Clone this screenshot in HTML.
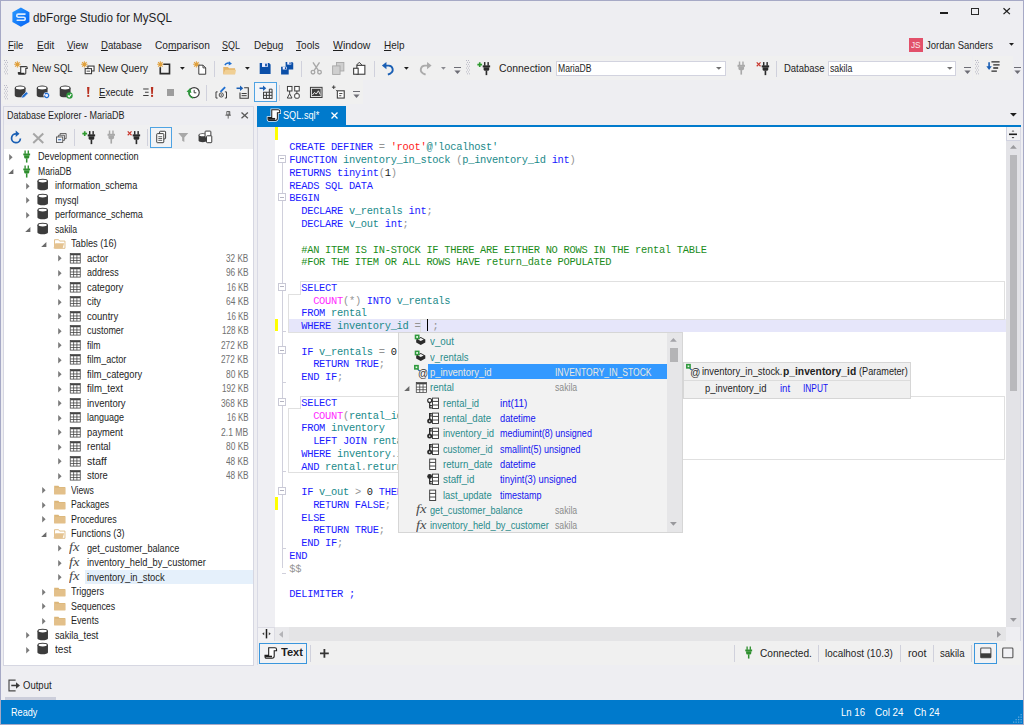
<!DOCTYPE html>
<html lang="en"><head><meta charset="utf-8"><title>dbForge Studio for MySQL</title>
<style>
*{margin:0;padding:0}
html,body{width:1024px;height:725px;overflow:hidden;background:#eeeef2}
body{position:relative;font-family:"Liberation Sans", sans-serif;font-size:10px;color:#1e1e1e}
#app{position:absolute;left:0;top:0;width:1024px;height:725px;overflow:hidden;background:#eeeef2}
#app div,#app svg.i,.t{position:absolute}
.t{white-space:pre;line-height:1;transform-origin:0 50%}
.t u{text-decoration:underline;text-underline-offset:1px;text-decoration-thickness:1px}
svg.i{overflow:visible}
</style></head>
<body><div id="app">
<div style="left:0.00px;top:0.00px;width:1024.00px;height:725.00px;border:1px solid #a6a9c6;box-sizing:border-box;z-index:50;pointer-events:none;"></div>
<svg class="i" style="left:11.50px;top:7.00px;" width="18" height="20" viewBox="0 0 18 20"><defs><linearGradient id="lg" x1="0" y1="0" x2="1" y2="1"><stop offset="0" stop-color="#2a9bff"/><stop offset="1" stop-color="#0562f5"/></linearGradient></defs>
<path d="M8.9 0.4 L17.4 5.2 V14.9 L8.9 19.8 L0.4 14.9 V5.2 Z" fill="url(#lg)"/>
<path d="M13 7.1 H6.3 a1.55 1.55 0 0 0 0 3.1 H11.7 a1.55 1.55 0 0 1 0 3.1 H5.2" fill="none" stroke="#dcecff" stroke-width="1.6" stroke-linecap="round"/></svg>
<span class="t" style="left:33.40px;top:12px;font-size:12px;color:#1e1e1e;transform:scaleX(0.9738);">dbForge Studio for MySQL</span>
<div style="left:940.00px;top:12.10px;width:8.00px;height:2.00px;background:#1e1e1e;"></div>
<div style="left:971.00px;top:7.70px;width:8.30px;height:7.50px;border:1px solid #2a2a2a;box-sizing:border-box;border-top-width:1.6px;"></div>
<svg class="i" style="left:1003.40px;top:8.40px;" width="7.4" height="6.4" viewBox="0 0 7.4 6.4"><path d="M0.5 0.3 L6.9 6.1 M6.9 0.3 L0.5 6.1" stroke="#1e1e1e" stroke-width="1.25" fill="none"/></svg>
<span class="t" style="left:8.40px;top:40px;font-size:11px;color:#1e1e1e;transform:scaleX(0.8627);"><u>F</u>ile</span>
<span class="t" style="left:36.70px;top:40px;font-size:11px;color:#1e1e1e;transform:scaleX(0.9120);"><u>E</u>dit</span>
<span class="t" style="left:66.80px;top:40px;font-size:11px;color:#1e1e1e;transform:scaleX(0.8877);"><u>V</u>iew</span>
<span class="t" style="left:100.80px;top:40px;font-size:11px;color:#1e1e1e;transform:scaleX(0.8685);"><u>D</u>atabase</span>
<span class="t" style="left:154.70px;top:40px;font-size:11px;color:#1e1e1e;transform:scaleX(0.9239);">Co<u>m</u>parison</span>
<span class="t" style="left:222.40px;top:40px;font-size:11px;color:#1e1e1e;transform:scaleX(0.8131);"><u>S</u>QL</span>
<span class="t" style="left:253.70px;top:40px;font-size:11px;color:#1e1e1e;transform:scaleX(0.9068);">De<u>b</u>ug</span>
<span class="t" style="left:296.30px;top:40px;font-size:11px;color:#1e1e1e;transform:scaleX(0.9148);"><u>T</u>ools</span>
<span class="t" style="left:333.00px;top:40px;font-size:11px;color:#1e1e1e;transform:scaleX(0.9559);"><u>W</u>indow</span>
<span class="t" style="left:383.50px;top:40px;font-size:11px;color:#1e1e1e;transform:scaleX(0.9061);"><u>H</u>elp</span>
<div style="left:909.00px;top:38.40px;width:13.50px;height:13.20px;background:#e2506a;"></div>
<span class="t" style="left:911.00px;top:41px;font-size:8.6px;color:#fbe9ec;transform:scaleX(0.9570);">JS</span>
<span class="t" style="left:926.20px;top:40px;font-size:11px;color:#1e1e1e;transform:scaleX(0.8626);">Jordan Sanders</span>
<svg class="i" style="left:1009.10px;top:43.20px;" width="5" height="3" viewBox="0 0 5 3"><path d="M0 0 H5 L2.5 2.8 Z" fill="#1e1e1e"/></svg>
<div style="left:1.00px;top:56.20px;width:461.50px;height:23.80px;background:#f0f0f0;"></div>
<div style="left:463.00px;top:56.20px;width:509.00px;height:23.80px;background:#f0f0f0;"></div>
<div style="left:972.50px;top:56.20px;width:40.00px;height:23.80px;background:#f0f0f0;"></div>
<div style="left:1.00px;top:80.20px;width:361.50px;height:24.00px;background:#f0f0f0;"></div>
<svg class="i" style="left:3.50px;top:60.00px;" width="5" height="16" viewBox="0 0 5 16"><g fill="#b9b9c6"><rect x="0" y="0.0" width="1" height="1"/><rect x="2" y="0.0" width="1" height="1"/><rect x="1" y="1.9" width="1" height="1"/><rect x="3" y="1.9" width="1" height="1"/><rect x="0" y="3.8" width="1" height="1"/><rect x="2" y="3.8" width="1" height="1"/><rect x="1" y="5.7" width="1" height="1"/><rect x="3" y="5.7" width="1" height="1"/><rect x="0" y="7.6" width="1" height="1"/><rect x="2" y="7.6" width="1" height="1"/><rect x="1" y="9.5" width="1" height="1"/><rect x="3" y="9.5" width="1" height="1"/><rect x="0" y="11.4" width="1" height="1"/><rect x="2" y="11.4" width="1" height="1"/><rect x="1" y="13.3" width="1" height="1"/><rect x="3" y="13.3" width="1" height="1"/></g></svg>
<svg class="i" style="left:3.50px;top:84.50px;" width="5" height="16" viewBox="0 0 5 16"><g fill="#b9b9c6"><rect x="0" y="0.0" width="1" height="1"/><rect x="2" y="0.0" width="1" height="1"/><rect x="1" y="1.9" width="1" height="1"/><rect x="3" y="1.9" width="1" height="1"/><rect x="0" y="3.8" width="1" height="1"/><rect x="2" y="3.8" width="1" height="1"/><rect x="1" y="5.7" width="1" height="1"/><rect x="3" y="5.7" width="1" height="1"/><rect x="0" y="7.6" width="1" height="1"/><rect x="2" y="7.6" width="1" height="1"/><rect x="1" y="9.5" width="1" height="1"/><rect x="3" y="9.5" width="1" height="1"/><rect x="0" y="11.4" width="1" height="1"/><rect x="2" y="11.4" width="1" height="1"/><rect x="1" y="13.3" width="1" height="1"/><rect x="3" y="13.3" width="1" height="1"/></g></svg>
<svg class="i" style="left:465.50px;top:60.00px;" width="5" height="16" viewBox="0 0 5 16"><g fill="#b9b9c6"><rect x="0" y="0.0" width="1" height="1"/><rect x="2" y="0.0" width="1" height="1"/><rect x="1" y="1.9" width="1" height="1"/><rect x="3" y="1.9" width="1" height="1"/><rect x="0" y="3.8" width="1" height="1"/><rect x="2" y="3.8" width="1" height="1"/><rect x="1" y="5.7" width="1" height="1"/><rect x="3" y="5.7" width="1" height="1"/><rect x="0" y="7.6" width="1" height="1"/><rect x="2" y="7.6" width="1" height="1"/><rect x="1" y="9.5" width="1" height="1"/><rect x="3" y="9.5" width="1" height="1"/><rect x="0" y="11.4" width="1" height="1"/><rect x="2" y="11.4" width="1" height="1"/><rect x="1" y="13.3" width="1" height="1"/><rect x="3" y="13.3" width="1" height="1"/></g></svg>
<svg class="i" style="left:975.30px;top:60.00px;" width="5" height="16" viewBox="0 0 5 16"><g fill="#b9b9c6"><rect x="0" y="0.0" width="1" height="1"/><rect x="2" y="0.0" width="1" height="1"/><rect x="1" y="1.9" width="1" height="1"/><rect x="3" y="1.9" width="1" height="1"/><rect x="0" y="3.8" width="1" height="1"/><rect x="2" y="3.8" width="1" height="1"/><rect x="1" y="5.7" width="1" height="1"/><rect x="3" y="5.7" width="1" height="1"/><rect x="0" y="7.6" width="1" height="1"/><rect x="2" y="7.6" width="1" height="1"/><rect x="1" y="9.5" width="1" height="1"/><rect x="3" y="9.5" width="1" height="1"/><rect x="0" y="11.4" width="1" height="1"/><rect x="2" y="11.4" width="1" height="1"/><rect x="1" y="13.3" width="1" height="1"/><rect x="3" y="13.3" width="1" height="1"/></g></svg>
<svg class="i" style="left:14.05px;top:60.95px;" width="14.5" height="14.5" viewBox="0 0 16 16"><g stroke="#e0a03c" stroke-width="1.15" fill="none"><path d="M3.7 0.2 V7.2 M0.2 3.7 H7.2 M1.2 1.2 L6.2 6.2 M6.2 1.2 L1.2 6.2"/></g><circle cx="3.7" cy="3.7" r="1.3" fill="#e0a03c"/><path d="M7.4 6.2 H13.4 Q14.6 6.2 14.6 7.4 V8.2 H13 V13.6 Q13 14.6 11.8 14.6 H6 Q4.8 14.6 4.8 13.6 V12.6 H7.4 Z" fill="#fafafa" stroke="#3c3c3c" stroke-width="1.2"/><path d="M5 13.8 H11.6" stroke="#2b2b2b" stroke-width="1.6"/></svg>
<span class="t" style="left:31.60px;top:63px;font-size:11.4px;color:#1e1e1e;transform:scaleX(0.8328);">New SQL</span>
<svg class="i" style="left:80.75px;top:60.95px;" width="14.5" height="14.5" viewBox="0 0 16 16"><g stroke="#e0a03c" stroke-width="1.15" fill="none"><path d="M3.7 0.2 V7.2 M0.2 3.7 H7.2 M1.2 1.2 L6.2 6.2 M6.2 1.2 L1.2 6.2"/></g><circle cx="3.7" cy="3.7" r="1.3" fill="#e0a03c"/><rect x="7.6" y="5.6" width="6.8" height="5.4" fill="#fff" stroke="#3c3c3c" stroke-width="1.2"/><rect x="4.6" y="8.4" width="7" height="5.6" fill="#fff" stroke="#3c3c3c" stroke-width="1.2"/><path d="M6.2 11.2 H10" stroke="#3c3c3c" stroke-width="1"/></svg>
<span class="t" style="left:98.40px;top:63px;font-size:11.4px;color:#1e1e1e;transform:scaleX(0.8774);">New Query</span>
<svg class="i" style="left:157.25px;top:60.95px;" width="14.5" height="14.5" viewBox="0 0 16 16"><g stroke="#e0a03c" stroke-width="1.15" fill="none"><path d="M3.7 0.2 V7.2 M0.2 3.7 H7.2 M1.2 1.2 L6.2 6.2 M6.2 1.2 L1.2 6.2"/></g><circle cx="3.7" cy="3.7" r="1.3" fill="#e0a03c"/><path d="M7 3.6 H13.8 V14 H3.6 V7" fill="none" stroke="#2b2b2b" stroke-width="1.8"/></svg>
<svg class="i" style="left:179.80px;top:67.10px;" width="4.8" height="3" viewBox="0 0 4.8 3"><path d="M0 0 H4.8 L2.4 2.7 Z" fill="#1e1e1e"/></svg>
<svg class="i" style="left:193.35px;top:60.95px;" width="14.5" height="14.5" viewBox="0 0 16 16"><g stroke="#e0a03c" stroke-width="1.15" fill="none"><path d="M3.7 0.2 V7.2 M0.2 3.7 H7.2 M1.2 1.2 L6.2 6.2 M6.2 1.2 L1.2 6.2"/></g><circle cx="3.7" cy="3.7" r="1.3" fill="#e0a03c"/><path d="M6.4 4.6 H11 L14 7.6 V14.6 H6.4 Z" fill="#fff" stroke="#3c3c3c" stroke-width="1.1"/><path d="M11 4.6 V7.6 H14" fill="none" stroke="#3c3c3c" stroke-width="1"/></svg>
<div style="left:213.80px;top:60.50px;width:1.00px;height:16.00px;background:#d0d1dc;"></div>
<svg class="i" style="left:221.75px;top:60.95px;" width="14.5" height="14.5" viewBox="0 0 16 16"><path d="M1.4 6.6 H6.6 L7.8 8 H14.4 V14.6 H1.4 Z" fill="#e5b467"/><path d="M1.4 14.6 L3.6 9.6 H15.6 L14.4 14.6 Z" fill="#f0cf94"/><path d="M3.2 4.6 C4.2 2.4 6.6 2 8.6 2.6" stroke="#1f6fd0" stroke-width="1.6" fill="none"/><path d="M7.6 0.4 L11 3 L7.4 5 Z" fill="#1f6fd0"/></svg>
<svg class="i" style="left:244.80px;top:67.10px;" width="4.8" height="3" viewBox="0 0 4.8 3"><path d="M0 0 H4.8 L2.4 2.7 Z" fill="#1e1e1e"/></svg>
<svg class="i" style="left:258.05px;top:60.95px;" width="14.5" height="14.5" viewBox="0 0 16 16"><g transform="translate(1,1.4) scale(0.86)"><path d="M1 1 H13 L15 3 V15 H1 Z" fill="#0b4fa8"/><rect x="4" y="1" width="7.4" height="5" fill="#eef"/><rect x="8" y="1.8" width="2.2" height="3.4" fill="#0b4fa8"/></g></svg>
<svg class="i" style="left:280.35px;top:60.95px;" width="14.5" height="14.5" viewBox="0 0 16 16"><g transform="translate(5.6,0.4) scale(0.6)"><path d="M1 1 H13 L15 3 V15 H1 Z" fill="#0b4fa8"/><rect x="4" y="1" width="7.4" height="5" fill="#eef"/><rect x="8" y="1.8" width="2.2" height="3.4" fill="#0b4fa8"/></g><g transform="translate(0.6,5.8) scale(0.6)"><path d="M1 1 H13 L15 3 V15 H1 Z" fill="#0b4fa8"/><rect x="4" y="1" width="7.4" height="5" fill="#eef"/><rect x="8" y="1.8" width="2.2" height="3.4" fill="#0b4fa8"/></g></svg>
<div style="left:300.80px;top:60.50px;width:1.00px;height:16.00px;background:#d0d1dc;"></div>
<svg class="i" style="left:308.55px;top:60.95px;" width="14.5" height="14.5" viewBox="0 0 16 16"><g stroke="#a8a8a8" fill="none" stroke-width="1.5"><path d="M4.4 1.4 L10.6 11 M11.6 1.4 L5.4 11"/><circle cx="4.4" cy="12.4" r="2"/><circle cx="11.6" cy="12.4" r="2"/></g></svg>
<svg class="i" style="left:330.75px;top:60.95px;" width="14.5" height="14.5" viewBox="0 0 16 16"><rect x="6" y="1.6" width="8.2" height="9.4" fill="#cfcfcf" stroke="#a8a8a8" stroke-width="1"/><rect x="1.8" y="5.4" width="8.2" height="9.4" fill="#cfcfcf" stroke="#a8a8a8" stroke-width="1"/></svg>
<svg class="i" style="left:352.05px;top:60.95px;" width="14.5" height="14.5" viewBox="0 0 16 16"><path d="M5 4.6 L8 1.4 L11 4.6" fill="none" stroke="#3c3c3c" stroke-width="1.1"/><rect x="5.4" y="4.8" width="8.8" height="9.8" fill="#fff" stroke="#3c3c3c" stroke-width="1.2"/><rect x="1.8" y="8" width="5" height="6.6" fill="#fff" stroke="#3c3c3c" stroke-width="1.2"/></svg>
<div style="left:373.70px;top:60.50px;width:1.00px;height:16.00px;background:#d0d1dc;"></div>
<svg class="i" style="left:380.75px;top:60.95px;" width="14.5" height="14.5" viewBox="0 0 16 16"><path d="M3.4 5 H8.6 A4.6 4.6 0 0 1 10.6 13.6 L7.6 15" fill="none" stroke="#1a5fb4" stroke-width="2"/><path d="M1 5 L6 1 V9 Z" fill="#1a5fb4"/></svg>
<svg class="i" style="left:403.90px;top:67.10px;" width="4.8" height="3" viewBox="0 0 4.8 3"><path d="M0 0 H4.8 L2.4 2.7 Z" fill="#1e1e1e"/></svg>
<svg class="i" style="left:417.75px;top:60.95px;" width="14.5" height="14.5" viewBox="0 0 16 16"><path d="M12.6 5 H7.4 A4.6 4.6 0 0 0 5.4 13.6 L8.4 15" fill="none" stroke="#ababab" stroke-width="2"/><path d="M15 5 L10 1 V9 Z" fill="#ababab"/></svg>
<svg class="i" style="left:440.90px;top:67.10px;" width="4.8" height="3" viewBox="0 0 4.8 3"><path d="M0 0 H4.8 L2.4 2.7 Z" fill="#8a8a90"/></svg>
<svg class="i" style="left:454.10px;top:67.00px;" width="7" height="8" viewBox="0 0 7 8"><path d="M0 0.5 H7" stroke="#6d6d75" stroke-width="1"/><path d="M0.4 3.4 H6.6 L3.5 7 Z" fill="#6d6d75"/></svg>
<svg class="i" style="left:477.25px;top:60.95px;" width="14.5" height="14.5" viewBox="0 0 16 16"><g transform="translate(2.4,0.6)"><g fill="#2b2b2b"><rect x="5.3" y="0.6" width="1.6" height="4"/><rect x="9.1" y="0.6" width="1.6" height="4"/><rect x="3.9" y="4.2" width="8.2" height="2.2"/><path d="M4.9 6.2 H11.1 V8.4 Q11.1 10.2 9.4 10.2 H6.6 Q4.9 10.2 4.9 8.4 Z"/><rect x="7.1" y="10" width="1.8" height="5"/></g></g><path d="M0.4 4 H5.6 M3 1.4 V6.6" stroke="#2f9a2f" stroke-width="1.8" fill="none"/></svg>
<span class="t" style="left:498.60px;top:63px;font-size:11.4px;color:#1e1e1e;transform:scaleX(0.9126);">Connection</span>
<div style="left:555.50px;top:60.50px;width:170.30px;height:15.00px;background:#fff;border:1px solid #d2d3df;box-sizing:border-box;"></div>
<span class="t" style="left:557.80px;top:64px;font-size:10px;color:#1e1e1e;transform:scaleX(0.8585);">MariaDB</span>
<svg class="i" style="left:716.00px;top:66.80px;" width="5.6" height="3" viewBox="0 0 5.6 3"><path d="M0 0 H5.6 L2.8 2.7 Z" fill="#717171"/></svg>
<svg class="i" style="left:733.75px;top:60.95px;" width="14.5" height="14.5" viewBox="0 0 16 16"><g fill="#a9a9a9"><rect x="5.3" y="0.6" width="1.6" height="4"/><rect x="9.1" y="0.6" width="1.6" height="4"/><rect x="3.9" y="4.2" width="8.2" height="2.2"/><path d="M4.9 6.2 H11.1 V8.4 Q11.1 10.2 9.4 10.2 H6.6 Q4.9 10.2 4.9 8.4 Z"/><rect x="7.1" y="10" width="1.8" height="5"/></g></svg>
<svg class="i" style="left:755.95px;top:60.95px;" width="14.5" height="14.5" viewBox="0 0 16 16"><g transform="translate(2.4,0.6)"><g fill="#2b2b2b"><rect x="5.3" y="0.6" width="1.6" height="4"/><rect x="9.1" y="0.6" width="1.6" height="4"/><rect x="3.9" y="4.2" width="8.2" height="2.2"/><path d="M4.9 6.2 H11.1 V8.4 Q11.1 10.2 9.4 10.2 H6.6 Q4.9 10.2 4.9 8.4 Z"/><rect x="7.1" y="10" width="1.8" height="5"/></g></g><path d="M0.8 1.6 L5 5.8 M5 1.6 L0.8 5.8" stroke="#c8372d" stroke-width="1.3" fill="none"/></svg>
<div style="left:776.10px;top:60.50px;width:1.00px;height:16.00px;background:#d0d1dc;"></div>
<span class="t" style="left:783.80px;top:63px;font-size:11.4px;color:#1e1e1e;transform:scaleX(0.8326);">Database</span>
<div style="left:828.00px;top:60.50px;width:128.40px;height:15.00px;background:#fff;border:1px solid #d2d3df;box-sizing:border-box;"></div>
<span class="t" style="left:830.30px;top:64px;font-size:10px;color:#1e1e1e;transform:scaleX(0.8718);">sakila</span>
<svg class="i" style="left:946.60px;top:66.80px;" width="5.6" height="3" viewBox="0 0 5.6 3"><path d="M0 0 H5.6 L2.8 2.7 Z" fill="#717171"/></svg>
<svg class="i" style="left:963.80px;top:67.00px;" width="7" height="8" viewBox="0 0 7 8"><path d="M0 0.5 H7" stroke="#6d6d75" stroke-width="1"/><path d="M0.4 3.4 H6.6 L3.5 7 Z" fill="#6d6d75"/></svg>
<svg class="i" style="left:985.75px;top:60.35px;" width="14.5" height="14.5" viewBox="0 0 16 16"><path d="M6 2 H15 M8 5.4 H15 M8 8.8 H13.4 M6 12.2 H12" stroke="#2b2b2b" stroke-width="1.5" fill="none"/><path d="M3.4 2.4 V9" stroke="#1a5fb4" stroke-width="1.8"/><path d="M0.4 7 H6.4 L3.4 11 Z" fill="#1a5fb4"/></svg>
<svg class="i" style="left:1014.10px;top:67.00px;" width="7" height="8" viewBox="0 0 7 8"><path d="M0 0.5 H7" stroke="#6d6d75" stroke-width="1"/><path d="M0.4 3.4 H6.6 L3.5 7 Z" fill="#6d6d75"/></svg>
<svg class="i" style="left:13.95px;top:84.75px;" width="14.5" height="14.5" viewBox="0 0 16 16"><g transform="translate(-0.8,-0.2) scale(0.95)"><path d="M1.7 3.6 V12.4 C1.7 15.3 14.3 15.3 14.3 12.4 V3.6 Z" fill="#3c3c3c"/><ellipse cx="8" cy="3.6" rx="6.3" ry="2.7" fill="#3c3c3c"/><ellipse cx="8" cy="3.7" rx="5" ry="1.7" fill="#fff"/></g><path d="M8.2 14.6 L9 11.8 L13.6 7.4 L15.6 9.4 L11 13.9 Z" fill="#1f6fd0" stroke="#eef" stroke-width="0.7"/></svg>
<svg class="i" style="left:36.35px;top:84.75px;" width="14.5" height="14.5" viewBox="0 0 16 16"><g transform="translate(-0.8,-0.2) scale(0.95)"><path d="M1.7 3.6 V12.4 C1.7 15.3 14.3 15.3 14.3 12.4 V3.6 Z" fill="#3c3c3c"/><ellipse cx="8" cy="3.6" rx="6.3" ry="2.7" fill="#3c3c3c"/><ellipse cx="8" cy="3.7" rx="5" ry="1.7" fill="#fff"/></g><circle cx="11.6" cy="11.4" r="3.4" fill="#eef"/><path d="M9.4 11.6 a2.3 2.3 0 1 0 1.1 -2" fill="none" stroke="#1f6fd0" stroke-width="1.4"/><path d="M9.2 8.4 L11.8 9 L10 10.8 Z" fill="#1f6fd0"/></svg>
<svg class="i" style="left:58.75px;top:84.75px;" width="14.5" height="14.5" viewBox="0 0 16 16"><g transform="translate(-0.8,-0.2) scale(0.95)"><path d="M1.7 3.6 V12.4 C1.7 15.3 14.3 15.3 14.3 12.4 V3.6 Z" fill="#3c3c3c"/><ellipse cx="8" cy="3.6" rx="6.3" ry="2.7" fill="#3c3c3c"/><ellipse cx="8" cy="3.7" rx="5" ry="1.7" fill="#fff"/></g><circle cx="11.6" cy="11.6" r="3.5" fill="#2e9a3c"/><path d="M9.8 11.6 L11.2 13 L13.5 10.2" fill="none" stroke="#fff" stroke-width="1.3"/></svg>
<svg class="i" style="left:80.95px;top:84.75px;" width="14.5" height="14.5" viewBox="0 0 16 16"><path d="M6.7 2.2 H9.3 L8.8 9.8 H7.2 Z" fill="#b8301f"/><rect x="6.9" y="10.9" width="2.2" height="2.2" fill="#b8301f"/></svg>
<span class="t" style="left:98.50px;top:87px;font-size:11.4px;color:#1e1e1e;transform:scaleX(0.8404);"><u>E</u>xecute</span>
<svg class="i" style="left:140.75px;top:84.75px;" width="14.5" height="14.5" viewBox="0 0 16 16"><path d="M2.4 4.4 H8.4 M4.4 8 H8.4 M2.4 11.6 H8.4" stroke="#3c3c3c" stroke-width="1.1" fill="none"/><path d="M10.9 2.2 H13.5 L13 9.8 H11.4 Z" fill="#b8301f"/><rect x="11.1" y="10.9" width="2.2" height="2.2" fill="#b8301f"/></svg>
<div style="left:167.10px;top:88.60px;width:7.00px;height:7.00px;background:#9d9d9d;"></div>
<svg class="i" style="left:186.25px;top:84.75px;" width="14.5" height="14.5" viewBox="0 0 16 16"><circle cx="9" cy="8.4" r="5.6" fill="#fff" stroke="#3c3c3c" stroke-width="1.3"/><path d="M9 5.4 V8.6 H11.4" stroke="#3c3c3c" stroke-width="1.1" fill="none"/><path d="M0.6 7.4 L4.6 3.2 L6 8.8 Z" fill="#2e9a3c"/><path d="M3.4 7 A6 6 0 0 0 8 14.4" stroke="#2e9a3c" stroke-width="1.6" fill="none"/></svg>
<div style="left:205.90px;top:84.50px;width:1.00px;height:16.50px;background:#d0d1dc;"></div>
<svg class="i" style="left:214.25px;top:84.75px;" width="14.5" height="14.5" viewBox="0 0 16 16"><path d="M2.2 7.6 V14.4 H4 M13.8 7.6 V14.4 H12 M2.2 7.6 H4 M13.8 7.6 H12" fill="none" stroke="#3c3c3c" stroke-width="1.1"/><circle cx="8" cy="11" r="2.3" fill="none" stroke="#3c3c3c" stroke-width="1"/><circle cx="8" cy="11" r="0.8" fill="#3c3c3c"/><path d="M6.4 6.8 L11.6 1.6 L13 3 L7.8 8.2 Z" fill="#1f6fd0"/></svg>
<svg class="i" style="left:235.75px;top:84.75px;" width="14.5" height="14.5" viewBox="0 0 16 16"><path d="M0.6 3.6 H5.6" stroke="#1a5fb4" stroke-width="1.7"/><path d="M4.4 0.6 L8 3.6 L4.4 6.6 Z" fill="#1a5fb4"/><path d="M9 3 H13.6 V14.6 H4.4 V8.4" fill="none" stroke="#3c3c3c" stroke-width="1.2"/><path d="M6.2 9.4 H11.8 M6.2 11.8 H11.8" stroke="#3c3c3c" stroke-width="1.1"/></svg>
<div style="left:254.10px;top:82.20px;width:22.50px;height:19.80px;background:#f2f5f9;border:1px solid #4fa3e3;box-sizing:border-box;"></div>
<svg class="i" style="left:259.15px;top:84.75px;" width="14.5" height="14.5" viewBox="0 0 16 16"><path d="M0.6 3.6 H5.6" stroke="#1a5fb4" stroke-width="1.7"/><path d="M4.4 0.6 L8 3.6 L4.4 6.6 Z" fill="#1a5fb4"/><g stroke="#3c3c3c" stroke-width="1.1" fill="none"><rect x="5" y="8" width="9.4" height="6.8"/><path d="M5 11.4 H14.4 M8.2 8 V14.8 M11.4 8 V14.8 M11.4 4.6 V8 M14.4 4.6 V8 M11.4 4.6 H14.4"/></g></svg>
<div style="left:278.80px;top:84.50px;width:1.00px;height:16.50px;background:#d0d1dc;"></div>
<svg class="i" style="left:286.35px;top:84.75px;" width="14.5" height="14.5" viewBox="0 0 16 16"><g stroke="#3c3c3c" stroke-width="1.1" fill="#fff"><rect x="1.6" y="1.6" width="5" height="5"/><rect x="9.6" y="1.6" width="5" height="5"/><path d="M4 9.6 L6.6 14.4 H1.4 Z"/><rect x="9.6" y="9.6" width="5" height="5" rx="1.4"/><path d="M4 6.6 V9.6 M12 6.6 V9.6" fill="none"/></g></svg>
<svg class="i" style="left:308.75px;top:84.75px;" width="14.5" height="14.5" viewBox="0 0 16 16"><rect x="1.6" y="2.6" width="12.8" height="11.2" fill="#e8e8e8" stroke="#3c3c3c" stroke-width="1.1"/><rect x="3.2" y="4.2" width="9.6" height="8" fill="#3c3c3c"/><path d="M3.8 11 L6.2 8.2 L8 10 L10.4 6.4 L12.4 10.6" fill="none" stroke="#f0f0f0" stroke-width="1.1"/></svg>
<svg class="i" style="left:330.75px;top:84.75px;" width="14.5" height="14.5" viewBox="0 0 16 16"><path d="M1 2.4 H5 M3 0.4 V4.4" stroke="#3c3c3c" stroke-width="1.1"/><path d="M5.4 5.4 L6.4 6.4" stroke="#3c3c3c" stroke-width="1"/><rect x="7" y="6.4" width="7.6" height="8" fill="#fff" stroke="#3c3c3c" stroke-width="1.2"/><path d="M9 9.4 H12.6 M9 11.8 H11.4" stroke="#3c3c3c" stroke-width="1"/></svg>
<svg class="i" style="left:352.70px;top:91.00px;" width="7" height="8" viewBox="0 0 7 8"><path d="M0 0.5 H7" stroke="#6d6d75" stroke-width="1"/><path d="M0.4 3.4 H6.6 L3.5 7 Z" fill="#6d6d75"/></svg>
<div style="left:3.00px;top:105.60px;width:251.00px;height:560.40px;background:#eeeef2;border:1px solid #d6d7e2;box-sizing:border-box;"></div>
<span class="t" style="left:7.40px;top:111px;font-size:10px;color:#1e1e1e;transform:scaleX(0.9004);">Database Explorer - MariaDB</span>
<svg class="i" style="left:225.00px;top:111.40px;" width="6.4" height="8" viewBox="0 0 6.4 8"><path d="M1.8 0.5 H4.8 V4 H1.8 Z M4 0.5 V4" fill="none" stroke="#5a5a5a" stroke-width="0.9"/><path d="M0.4 4.2 H6 M3.2 4.4 V7.6" stroke="#5a5a5a" stroke-width="0.9" fill="none"/></svg>
<svg class="i" style="left:240.60px;top:111.60px;" width="7.4" height="6.6" viewBox="0 0 7.4 6.6"><path d="M0.5 0.4 L6.9 6.2 M6.9 0.4 L0.5 6.2" stroke="#5a5a5a" stroke-width="1.3" fill="none"/></svg>
<div style="left:4.00px;top:124.60px;width:249.00px;height:24.20px;background:#f0f0f1;"></div>
<svg class="i" style="left:9.15px;top:130.35px;" width="14.5" height="14.5" viewBox="0 0 16 16"><path d="M12.6 9.4 A4.9 4.9 0 1 1 8 4.2" fill="none" stroke="#1a5fb4" stroke-width="1.9"/><path d="M7.4 0.6 L11.6 4.2 L7.4 7.6 Z" fill="#1a5fb4"/></svg>
<svg class="i" style="left:31.95px;top:131.75px;" width="12.5" height="12.5" viewBox="0 0 16 16"><path d="M1.6 2 L14.4 14 M14.4 2 L1.6 14" stroke="#a6a6a6" stroke-width="2.6" fill="none"/></svg>
<svg class="i" style="left:54.80px;top:131.60px;" width="12.4" height="12.4" viewBox="0 0 16 16"><g fill="#f4f4f6" stroke="#4a4a4a" stroke-width="1.1"><path d="M6.6 4 V2 H14.4 V8.6 H12.4"/><path d="M4.4 6.2 V4.2 H12.2 V10.8 H10.2"/><rect x="2" y="6.4" width="8" height="7"/></g><path d="M4 10 H8" stroke="#1a5fb4" stroke-width="1.3"/></svg>
<div style="left:74.10px;top:129.00px;width:1.00px;height:16.50px;background:#d0d1dc;"></div>
<svg class="i" style="left:81.95px;top:130.35px;" width="14.5" height="14.5" viewBox="0 0 16 16"><g transform="translate(2.4,0.6)"><g fill="#2b2b2b"><rect x="5.3" y="0.6" width="1.6" height="4"/><rect x="9.1" y="0.6" width="1.6" height="4"/><rect x="3.9" y="4.2" width="8.2" height="2.2"/><path d="M4.9 6.2 H11.1 V8.4 Q11.1 10.2 9.4 10.2 H6.6 Q4.9 10.2 4.9 8.4 Z"/><rect x="7.1" y="10" width="1.8" height="5"/></g></g><path d="M0.4 4 H5.6 M3 1.4 V6.6" stroke="#2f9a2f" stroke-width="1.8" fill="none"/></svg>
<svg class="i" style="left:103.75px;top:130.35px;" width="14.5" height="14.5" viewBox="0 0 16 16"><g fill="#a9a9a9"><rect x="5.3" y="0.6" width="1.6" height="4"/><rect x="9.1" y="0.6" width="1.6" height="4"/><rect x="3.9" y="4.2" width="8.2" height="2.2"/><path d="M4.9 6.2 H11.1 V8.4 Q11.1 10.2 9.4 10.2 H6.6 Q4.9 10.2 4.9 8.4 Z"/><rect x="7.1" y="10" width="1.8" height="5"/></g></svg>
<svg class="i" style="left:126.55px;top:130.35px;" width="14.5" height="14.5" viewBox="0 0 16 16"><g transform="translate(2.4,0.6)"><g fill="#2b2b2b"><rect x="5.3" y="0.6" width="1.6" height="4"/><rect x="9.1" y="0.6" width="1.6" height="4"/><rect x="3.9" y="4.2" width="8.2" height="2.2"/><path d="M4.9 6.2 H11.1 V8.4 Q11.1 10.2 9.4 10.2 H6.6 Q4.9 10.2 4.9 8.4 Z"/><rect x="7.1" y="10" width="1.8" height="5"/></g></g><path d="M0.8 1.6 L5 5.8 M5 1.6 L0.8 5.8" stroke="#c8372d" stroke-width="1.3" fill="none"/></svg>
<div style="left:147.00px;top:129.00px;width:1.00px;height:16.50px;background:#d0d1dc;"></div>
<div style="left:150.30px;top:127.20px;width:21.70px;height:20.40px;background:#f1f3f6;border:1px solid #4fa3e3;box-sizing:border-box;"></div>
<svg class="i" style="left:153.95px;top:130.35px;" width="14.5" height="14.5" viewBox="0 0 16 16"><g fill="#fff" stroke="#3c3c3c" stroke-width="1.1"><rect x="6.2" y="1.4" width="6.6" height="8.4" rx="0.8"/><rect x="3" y="4" width="7.8" height="10" rx="0.8"/></g><path d="M4.8 7.4 H9 M4.8 9.4 H9 M4.8 11.4 H9" stroke="#3c3c3c" stroke-width="0.9"/></svg>
<svg class="i" style="left:176.95px;top:131.35px;" width="12.5" height="12.5" viewBox="0 0 16 16"><path d="M1.6 2.4 H14.4 L9.4 8.4 V14 L6.6 12.4 V8.4 Z" fill="#a8a8a8"/></svg>
<svg class="i" style="left:198.15px;top:130.35px;" width="14.5" height="14.5" viewBox="0 0 16 16"><g transform="translate(-0.6,3) scale(0.72)"><path d="M1.7 3.6 V12.4 C1.7 15.3 14.3 15.3 14.3 12.4 V3.6 Z" fill="#3c3c3c"/><ellipse cx="8" cy="3.6" rx="6.3" ry="2.7" fill="#3c3c3c"/><ellipse cx="8" cy="3.7" rx="5" ry="1.7" fill="#fff"/></g><g fill="#fff" stroke="#3c3c3c" stroke-width="1.1"><rect x="7.8" y="1.2" width="6.4" height="7.4" rx="0.8"/><rect x="9.4" y="6.4" width="5.8" height="7.6" rx="0.8"/></g></svg>
<div style="left:4.00px;top:148.80px;width:249.00px;height:516.40px;background:#ffffff;"></div>
<svg class="i" style="left:9.40px;top:153.80px;" width="4" height="6.4" viewBox="0 0 4 6.4"><path d="M0.2 0 L3.6 3.2 L0.2 6.4 Z" fill="#7a7a7a"/></svg>
<svg class="i" style="left:19.70px;top:150.00px;" width="13.4" height="13.4" viewBox="0 0 16 16"><g fill="#2f8f2f"><rect x="5.3" y="0.6" width="1.6" height="4"/><rect x="9.1" y="0.6" width="1.6" height="4"/><rect x="3.9" y="4.2" width="8.2" height="2.2"/><path d="M4.9 6.2 H11.1 V8.4 Q11.1 10.2 9.4 10.2 H6.6 Q4.9 10.2 4.9 8.4 Z"/><rect x="7.1" y="10" width="1.8" height="5"/></g></svg>
<span class="t" style="left:38.40px;top:152px;font-size:10px;color:#1e1e1e;transform:scaleX(0.9139);">Development connection</span>
<svg class="i" style="left:8.40px;top:169.30px;" width="5.6" height="5.2" viewBox="0 0 5.6 5.2"><path d="M5.4 0 V5 H0.2 Z" fill="#6a6a6a"/></svg>
<svg class="i" style="left:19.70px;top:164.50px;" width="13.4" height="13.4" viewBox="0 0 16 16"><g fill="#2f8f2f"><rect x="5.3" y="0.6" width="1.6" height="4"/><rect x="9.1" y="0.6" width="1.6" height="4"/><rect x="3.9" y="4.2" width="8.2" height="2.2"/><path d="M4.9 6.2 H11.1 V8.4 Q11.1 10.2 9.4 10.2 H6.6 Q4.9 10.2 4.9 8.4 Z"/><rect x="7.1" y="10" width="1.8" height="5"/></g></svg>
<span class="t" style="left:38.40px;top:167px;font-size:10px;color:#1e1e1e;transform:scaleX(0.8610);">MariaDB</span>
<svg class="i" style="left:25.60px;top:182.80px;" width="4" height="6.4" viewBox="0 0 4 6.4"><path d="M0.2 0 L3.6 3.2 L0.2 6.4 Z" fill="#7a7a7a"/></svg>
<svg class="i" style="left:36.35px;top:178.30px;" width="13.4" height="13.4" viewBox="0 0 16 16"><path d="M1.7 3.6 V12.4 C1.7 15.3 14.3 15.3 14.3 12.4 V3.6 Z" fill="#3c3c3c"/><ellipse cx="8" cy="3.6" rx="6.3" ry="2.7" fill="#3c3c3c"/><ellipse cx="8" cy="3.7" rx="5" ry="1.7" fill="#fff"/></svg>
<span class="t" style="left:54.70px;top:181px;font-size:10px;color:#1e1e1e;transform:scaleX(0.9140);">information_schema</span>
<svg class="i" style="left:25.60px;top:197.30px;" width="4" height="6.4" viewBox="0 0 4 6.4"><path d="M0.2 0 L3.6 3.2 L0.2 6.4 Z" fill="#7a7a7a"/></svg>
<svg class="i" style="left:36.35px;top:192.80px;" width="13.4" height="13.4" viewBox="0 0 16 16"><path d="M1.7 3.6 V12.4 C1.7 15.3 14.3 15.3 14.3 12.4 V3.6 Z" fill="#3c3c3c"/><ellipse cx="8" cy="3.6" rx="6.3" ry="2.7" fill="#3c3c3c"/><ellipse cx="8" cy="3.7" rx="5" ry="1.7" fill="#fff"/></svg>
<span class="t" style="left:54.70px;top:196px;font-size:10px;color:#1e1e1e;transform:scaleX(0.8957);">mysql</span>
<svg class="i" style="left:25.60px;top:211.80px;" width="4" height="6.4" viewBox="0 0 4 6.4"><path d="M0.2 0 L3.6 3.2 L0.2 6.4 Z" fill="#7a7a7a"/></svg>
<svg class="i" style="left:36.35px;top:207.30px;" width="13.4" height="13.4" viewBox="0 0 16 16"><path d="M1.7 3.6 V12.4 C1.7 15.3 14.3 15.3 14.3 12.4 V3.6 Z" fill="#3c3c3c"/><ellipse cx="8" cy="3.6" rx="6.3" ry="2.7" fill="#3c3c3c"/><ellipse cx="8" cy="3.7" rx="5" ry="1.7" fill="#fff"/></svg>
<span class="t" style="left:54.70px;top:210px;font-size:10px;color:#1e1e1e;transform:scaleX(0.9088);">performance_schema</span>
<svg class="i" style="left:24.60px;top:227.30px;" width="5.6" height="5.2" viewBox="0 0 5.6 5.2"><path d="M5.4 0 V5 H0.2 Z" fill="#6a6a6a"/></svg>
<svg class="i" style="left:36.35px;top:221.80px;" width="13.4" height="13.4" viewBox="0 0 16 16"><path d="M1.7 3.6 V12.4 C1.7 15.3 14.3 15.3 14.3 12.4 V3.6 Z" fill="#3c3c3c"/><ellipse cx="8" cy="3.6" rx="6.3" ry="2.7" fill="#3c3c3c"/><ellipse cx="8" cy="3.7" rx="5" ry="1.7" fill="#fff"/></svg>
<span class="t" style="left:54.70px;top:225px;font-size:10px;color:#1e1e1e;transform:scaleX(0.8640);">sakila</span>
<svg class="i" style="left:40.80px;top:241.80px;" width="5.6" height="5.2" viewBox="0 0 5.6 5.2"><path d="M5.4 0 V5 H0.2 Z" fill="#6a6a6a"/></svg>
<svg class="i" style="left:52.75px;top:236.65px;" width="13.5" height="13.5" viewBox="0 0 16 16"><path d="M1.8 3.2 H6.6 L7.8 4.8 H14.2 V13.4 H1.8 Z" fill="#fff" stroke="#dcb67a" stroke-width="1"/><path d="M0.6 13.4 L2.8 7.4 H13.2 L11.4 13.4 Z" fill="#e5c391"/></svg>
<span class="t" style="left:71.00px;top:239px;font-size:10px;color:#1e1e1e;transform:scaleX(0.9238);">Tables (16)</span>
<svg class="i" style="left:58.00px;top:255.30px;" width="4" height="6.4" viewBox="0 0 4 6.4"><path d="M0.2 0 L3.6 3.2 L0.2 6.4 Z" fill="#7a7a7a"/></svg>
<svg class="i" style="left:69.20px;top:251.75px;" width="12.5" height="12.5" viewBox="0 0 16 16"><g fill="none" stroke="#444" stroke-width="1"><rect x="1.6" y="2" width="12.8" height="12.2" fill="#fff"/><path d="M1.6 3.2 H14.4" stroke-width="2"/><path d="M1.6 7.6 H14.4 M1.6 10.9 H14.4 M5.9 4 V14.2 M10.1 4 V14.2"/></g></svg>
<span class="t" style="left:87.30px;top:254px;font-size:10px;color:#1e1e1e;transform:scaleX(0.9490);">actor</span>
<span class="t" style="left:226.10px;top:254px;font-size:10px;color:#707070;transform:scaleX(0.8183);">32 KB</span>
<svg class="i" style="left:58.00px;top:269.80px;" width="4" height="6.4" viewBox="0 0 4 6.4"><path d="M0.2 0 L3.6 3.2 L0.2 6.4 Z" fill="#7a7a7a"/></svg>
<svg class="i" style="left:69.20px;top:266.25px;" width="12.5" height="12.5" viewBox="0 0 16 16"><g fill="none" stroke="#444" stroke-width="1"><rect x="1.6" y="2" width="12.8" height="12.2" fill="#fff"/><path d="M1.6 3.2 H14.4" stroke-width="2"/><path d="M1.6 7.6 H14.4 M1.6 10.9 H14.4 M5.9 4 V14.2 M10.1 4 V14.2"/></g></svg>
<span class="t" style="left:87.30px;top:268px;font-size:10px;color:#1e1e1e;transform:scaleX(0.8910);">address</span>
<span class="t" style="left:225.80px;top:268px;font-size:10px;color:#707070;transform:scaleX(0.8294);">96 KB</span>
<svg class="i" style="left:58.00px;top:284.30px;" width="4" height="6.4" viewBox="0 0 4 6.4"><path d="M0.2 0 L3.6 3.2 L0.2 6.4 Z" fill="#7a7a7a"/></svg>
<svg class="i" style="left:69.20px;top:280.75px;" width="12.5" height="12.5" viewBox="0 0 16 16"><g fill="none" stroke="#444" stroke-width="1"><rect x="1.6" y="2" width="12.8" height="12.2" fill="#fff"/><path d="M1.6 3.2 H14.4" stroke-width="2"/><path d="M1.6 7.6 H14.4 M1.6 10.9 H14.4 M5.9 4 V14.2 M10.1 4 V14.2"/></g></svg>
<span class="t" style="left:87.30px;top:283px;font-size:10px;color:#1e1e1e;transform:scaleX(0.9463);">category</span>
<span class="t" style="left:226.80px;top:283px;font-size:10px;color:#707070;transform:scaleX(0.7927);">16 KB</span>
<svg class="i" style="left:58.00px;top:298.80px;" width="4" height="6.4" viewBox="0 0 4 6.4"><path d="M0.2 0 L3.6 3.2 L0.2 6.4 Z" fill="#7a7a7a"/></svg>
<svg class="i" style="left:69.20px;top:295.25px;" width="12.5" height="12.5" viewBox="0 0 16 16"><g fill="none" stroke="#444" stroke-width="1"><rect x="1.6" y="2" width="12.8" height="12.2" fill="#fff"/><path d="M1.6 3.2 H14.4" stroke-width="2"/><path d="M1.6 7.6 H14.4 M1.6 10.9 H14.4 M5.9 4 V14.2 M10.1 4 V14.2"/></g></svg>
<span class="t" style="left:87.30px;top:297px;font-size:10px;color:#1e1e1e;transform:scaleX(0.9333);">city</span>
<span class="t" style="left:225.50px;top:297px;font-size:10px;color:#707070;transform:scaleX(0.8404);">64 KB</span>
<svg class="i" style="left:58.00px;top:313.30px;" width="4" height="6.4" viewBox="0 0 4 6.4"><path d="M0.2 0 L3.6 3.2 L0.2 6.4 Z" fill="#7a7a7a"/></svg>
<svg class="i" style="left:69.20px;top:309.75px;" width="12.5" height="12.5" viewBox="0 0 16 16"><g fill="none" stroke="#444" stroke-width="1"><rect x="1.6" y="2" width="12.8" height="12.2" fill="#fff"/><path d="M1.6 3.2 H14.4" stroke-width="2"/><path d="M1.6 7.6 H14.4 M1.6 10.9 H14.4 M5.9 4 V14.2 M10.1 4 V14.2"/></g></svg>
<span class="t" style="left:87.30px;top:312px;font-size:10px;color:#1e1e1e;transform:scaleX(0.9513);">country</span>
<span class="t" style="left:226.80px;top:312px;font-size:10px;color:#707070;transform:scaleX(0.7927);">16 KB</span>
<svg class="i" style="left:58.00px;top:327.80px;" width="4" height="6.4" viewBox="0 0 4 6.4"><path d="M0.2 0 L3.6 3.2 L0.2 6.4 Z" fill="#7a7a7a"/></svg>
<svg class="i" style="left:69.20px;top:324.25px;" width="12.5" height="12.5" viewBox="0 0 16 16"><g fill="none" stroke="#444" stroke-width="1"><rect x="1.6" y="2" width="12.8" height="12.2" fill="#fff"/><path d="M1.6 3.2 H14.4" stroke-width="2"/><path d="M1.6 7.6 H14.4 M1.6 10.9 H14.4 M5.9 4 V14.2 M10.1 4 V14.2"/></g></svg>
<span class="t" style="left:87.30px;top:326px;font-size:10px;color:#1e1e1e;transform:scaleX(0.8948);">customer</span>
<span class="t" style="left:221.70px;top:326px;font-size:10px;color:#707070;transform:scaleX(0.8137);">128 KB</span>
<svg class="i" style="left:58.00px;top:342.30px;" width="4" height="6.4" viewBox="0 0 4 6.4"><path d="M0.2 0 L3.6 3.2 L0.2 6.4 Z" fill="#7a7a7a"/></svg>
<svg class="i" style="left:69.20px;top:338.75px;" width="12.5" height="12.5" viewBox="0 0 16 16"><g fill="none" stroke="#444" stroke-width="1"><rect x="1.6" y="2" width="12.8" height="12.2" fill="#fff"/><path d="M1.6 3.2 H14.4" stroke-width="2"/><path d="M1.6 7.6 H14.4 M1.6 10.9 H14.4 M5.9 4 V14.2 M10.1 4 V14.2"/></g></svg>
<span class="t" style="left:87.30px;top:341px;font-size:10px;color:#1e1e1e;transform:scaleX(0.8675);">film</span>
<span class="t" style="left:221.20px;top:341px;font-size:10px;color:#707070;transform:scaleX(0.8290);">272 KB</span>
<svg class="i" style="left:58.00px;top:356.80px;" width="4" height="6.4" viewBox="0 0 4 6.4"><path d="M0.2 0 L3.6 3.2 L0.2 6.4 Z" fill="#7a7a7a"/></svg>
<svg class="i" style="left:69.20px;top:353.25px;" width="12.5" height="12.5" viewBox="0 0 16 16"><g fill="none" stroke="#444" stroke-width="1"><rect x="1.6" y="2" width="12.8" height="12.2" fill="#fff"/><path d="M1.6 3.2 H14.4" stroke-width="2"/><path d="M1.6 7.6 H14.4 M1.6 10.9 H14.4 M5.9 4 V14.2 M10.1 4 V14.2"/></g></svg>
<span class="t" style="left:87.30px;top:355px;font-size:10px;color:#1e1e1e;transform:scaleX(0.9087);">film_actor</span>
<span class="t" style="left:221.20px;top:355px;font-size:10px;color:#707070;transform:scaleX(0.8290);">272 KB</span>
<svg class="i" style="left:58.00px;top:371.30px;" width="4" height="6.4" viewBox="0 0 4 6.4"><path d="M0.2 0 L3.6 3.2 L0.2 6.4 Z" fill="#7a7a7a"/></svg>
<svg class="i" style="left:69.20px;top:367.75px;" width="12.5" height="12.5" viewBox="0 0 16 16"><g fill="none" stroke="#444" stroke-width="1"><rect x="1.6" y="2" width="12.8" height="12.2" fill="#fff"/><path d="M1.6 3.2 H14.4" stroke-width="2"/><path d="M1.6 7.6 H14.4 M1.6 10.9 H14.4 M5.9 4 V14.2 M10.1 4 V14.2"/></g></svg>
<span class="t" style="left:87.30px;top:370px;font-size:10px;color:#1e1e1e;transform:scaleX(0.9265);">film_category</span>
<span class="t" style="left:225.50px;top:370px;font-size:10px;color:#707070;transform:scaleX(0.8404);">80 KB</span>
<svg class="i" style="left:58.00px;top:385.80px;" width="4" height="6.4" viewBox="0 0 4 6.4"><path d="M0.2 0 L3.6 3.2 L0.2 6.4 Z" fill="#7a7a7a"/></svg>
<svg class="i" style="left:69.20px;top:382.25px;" width="12.5" height="12.5" viewBox="0 0 16 16"><g fill="none" stroke="#444" stroke-width="1"><rect x="1.6" y="2" width="12.8" height="12.2" fill="#fff"/><path d="M1.6 3.2 H14.4" stroke-width="2"/><path d="M1.6 7.6 H14.4 M1.6 10.9 H14.4 M5.9 4 V14.2 M10.1 4 V14.2"/></g></svg>
<span class="t" style="left:87.30px;top:384px;font-size:10px;color:#1e1e1e;transform:scaleX(0.9615);">film_text</span>
<span class="t" style="left:221.70px;top:384px;font-size:10px;color:#707070;transform:scaleX(0.8137);">192 KB</span>
<svg class="i" style="left:58.00px;top:400.30px;" width="4" height="6.4" viewBox="0 0 4 6.4"><path d="M0.2 0 L3.6 3.2 L0.2 6.4 Z" fill="#7a7a7a"/></svg>
<svg class="i" style="left:69.20px;top:396.75px;" width="12.5" height="12.5" viewBox="0 0 16 16"><g fill="none" stroke="#444" stroke-width="1"><rect x="1.6" y="2" width="12.8" height="12.2" fill="#fff"/><path d="M1.6 3.2 H14.4" stroke-width="2"/><path d="M1.6 7.6 H14.4 M1.6 10.9 H14.4 M5.9 4 V14.2 M10.1 4 V14.2"/></g></svg>
<span class="t" style="left:87.30px;top:399px;font-size:10px;color:#1e1e1e;transform:scaleX(0.9513);">inventory</span>
<span class="t" style="left:221.20px;top:399px;font-size:10px;color:#707070;transform:scaleX(0.8290);">368 KB</span>
<svg class="i" style="left:58.00px;top:414.80px;" width="4" height="6.4" viewBox="0 0 4 6.4"><path d="M0.2 0 L3.6 3.2 L0.2 6.4 Z" fill="#7a7a7a"/></svg>
<svg class="i" style="left:69.20px;top:411.25px;" width="12.5" height="12.5" viewBox="0 0 16 16"><g fill="none" stroke="#444" stroke-width="1"><rect x="1.6" y="2" width="12.8" height="12.2" fill="#fff"/><path d="M1.6 3.2 H14.4" stroke-width="2"/><path d="M1.6 7.6 H14.4 M1.6 10.9 H14.4 M5.9 4 V14.2 M10.1 4 V14.2"/></g></svg>
<span class="t" style="left:87.30px;top:413px;font-size:10px;color:#1e1e1e;transform:scaleX(0.9014);">language</span>
<span class="t" style="left:226.80px;top:413px;font-size:10px;color:#707070;transform:scaleX(0.7927);">16 KB</span>
<svg class="i" style="left:58.00px;top:429.30px;" width="4" height="6.4" viewBox="0 0 4 6.4"><path d="M0.2 0 L3.6 3.2 L0.2 6.4 Z" fill="#7a7a7a"/></svg>
<svg class="i" style="left:69.20px;top:425.75px;" width="12.5" height="12.5" viewBox="0 0 16 16"><g fill="none" stroke="#444" stroke-width="1"><rect x="1.6" y="2" width="12.8" height="12.2" fill="#fff"/><path d="M1.6 3.2 H14.4" stroke-width="2"/><path d="M1.6 7.6 H14.4 M1.6 10.9 H14.4 M5.9 4 V14.2 M10.1 4 V14.2"/></g></svg>
<span class="t" style="left:87.30px;top:428px;font-size:10px;color:#1e1e1e;transform:scaleX(0.9333);">payment</span>
<span class="t" style="left:221.20px;top:428px;font-size:10px;color:#707070;transform:scaleX(0.8584);">2.1 MB</span>
<svg class="i" style="left:58.00px;top:443.80px;" width="4" height="6.4" viewBox="0 0 4 6.4"><path d="M0.2 0 L3.6 3.2 L0.2 6.4 Z" fill="#7a7a7a"/></svg>
<svg class="i" style="left:69.20px;top:440.25px;" width="12.5" height="12.5" viewBox="0 0 16 16"><g fill="none" stroke="#444" stroke-width="1"><rect x="1.6" y="2" width="12.8" height="12.2" fill="#fff"/><path d="M1.6 3.2 H14.4" stroke-width="2"/><path d="M1.6 7.6 H14.4 M1.6 10.9 H14.4 M5.9 4 V14.2 M10.1 4 V14.2"/></g></svg>
<span class="t" style="left:87.30px;top:442px;font-size:10px;color:#1e1e1e;transform:scaleX(0.9434);">rental</span>
<span class="t" style="left:225.50px;top:442px;font-size:10px;color:#707070;transform:scaleX(0.8404);">80 KB</span>
<svg class="i" style="left:58.00px;top:458.30px;" width="4" height="6.4" viewBox="0 0 4 6.4"><path d="M0.2 0 L3.6 3.2 L0.2 6.4 Z" fill="#7a7a7a"/></svg>
<svg class="i" style="left:69.20px;top:454.75px;" width="12.5" height="12.5" viewBox="0 0 16 16"><g fill="none" stroke="#444" stroke-width="1"><rect x="1.6" y="2" width="12.8" height="12.2" fill="#fff"/><path d="M1.6 3.2 H14.4" stroke-width="2"/><path d="M1.6 7.6 H14.4 M1.6 10.9 H14.4 M5.9 4 V14.2 M10.1 4 V14.2"/></g></svg>
<span class="t" style="left:87.30px;top:457px;font-size:10px;color:#1e1e1e;transform:scaleX(1.0578);">staff</span>
<span class="t" style="left:225.80px;top:457px;font-size:10px;color:#707070;transform:scaleX(0.8294);">48 KB</span>
<svg class="i" style="left:58.00px;top:472.80px;" width="4" height="6.4" viewBox="0 0 4 6.4"><path d="M0.2 0 L3.6 3.2 L0.2 6.4 Z" fill="#7a7a7a"/></svg>
<svg class="i" style="left:69.20px;top:469.25px;" width="12.5" height="12.5" viewBox="0 0 16 16"><g fill="none" stroke="#444" stroke-width="1"><rect x="1.6" y="2" width="12.8" height="12.2" fill="#fff"/><path d="M1.6 3.2 H14.4" stroke-width="2"/><path d="M1.6 7.6 H14.4 M1.6 10.9 H14.4 M5.9 4 V14.2 M10.1 4 V14.2"/></g></svg>
<span class="t" style="left:87.30px;top:471px;font-size:10px;color:#1e1e1e;transform:scaleX(0.9355);">store</span>
<span class="t" style="left:225.80px;top:471px;font-size:10px;color:#707070;transform:scaleX(0.8294);">48 KB</span>
<svg class="i" style="left:41.80px;top:487.30px;" width="4" height="6.4" viewBox="0 0 4 6.4"><path d="M0.2 0 L3.6 3.2 L0.2 6.4 Z" fill="#7a7a7a"/></svg>
<svg class="i" style="left:52.75px;top:483.15px;" width="13.5" height="13.5" viewBox="0 0 16 16"><path d="M1.4 3.2 H6.4 L7.6 4.8 H14.6 V13.4 H1.4 Z" fill="#dcb67a"/><path d="M1.4 5.6 H14.6 V13.4 H1.4 Z" fill="#e3c08a"/></svg>
<span class="t" style="left:71.00px;top:486px;font-size:10px;color:#1e1e1e;transform:scaleX(0.8642);">Views</span>
<svg class="i" style="left:41.80px;top:501.80px;" width="4" height="6.4" viewBox="0 0 4 6.4"><path d="M0.2 0 L3.6 3.2 L0.2 6.4 Z" fill="#7a7a7a"/></svg>
<svg class="i" style="left:52.75px;top:497.65px;" width="13.5" height="13.5" viewBox="0 0 16 16"><path d="M1.4 3.2 H6.4 L7.6 4.8 H14.6 V13.4 H1.4 Z" fill="#dcb67a"/><path d="M1.4 5.6 H14.6 V13.4 H1.4 Z" fill="#e3c08a"/></svg>
<span class="t" style="left:71.00px;top:500px;font-size:10px;color:#1e1e1e;transform:scaleX(0.8674);">Packages</span>
<svg class="i" style="left:41.80px;top:516.30px;" width="4" height="6.4" viewBox="0 0 4 6.4"><path d="M0.2 0 L3.6 3.2 L0.2 6.4 Z" fill="#7a7a7a"/></svg>
<svg class="i" style="left:52.75px;top:512.15px;" width="13.5" height="13.5" viewBox="0 0 16 16"><path d="M1.4 3.2 H6.4 L7.6 4.8 H14.6 V13.4 H1.4 Z" fill="#dcb67a"/><path d="M1.4 5.6 H14.6 V13.4 H1.4 Z" fill="#e3c08a"/></svg>
<span class="t" style="left:71.00px;top:515px;font-size:10px;color:#1e1e1e;transform:scaleX(0.8936);">Procedures</span>
<svg class="i" style="left:40.80px;top:531.80px;" width="5.6" height="5.2" viewBox="0 0 5.6 5.2"><path d="M5.4 0 V5 H0.2 Z" fill="#6a6a6a"/></svg>
<svg class="i" style="left:52.75px;top:526.65px;" width="13.5" height="13.5" viewBox="0 0 16 16"><path d="M1.8 3.2 H6.6 L7.8 4.8 H14.2 V13.4 H1.8 Z" fill="#fff" stroke="#dcb67a" stroke-width="1"/><path d="M0.6 13.4 L2.8 7.4 H13.2 L11.4 13.4 Z" fill="#e5c391"/></svg>
<span class="t" style="left:71.00px;top:529px;font-size:10px;color:#1e1e1e;transform:scaleX(0.9184);">Functions (3)</span>
<svg class="i" style="left:58.00px;top:545.30px;" width="4" height="6.4" viewBox="0 0 4 6.4"><path d="M0.2 0 L3.6 3.2 L0.2 6.4 Z" fill="#7a7a7a"/></svg>
<span class="t" style="left:69.45px;top:542px;font-size:11.5px;color:#4a4a4a;font-family:'Liberation Serif',serif;font-style:italic;transform:scaleX(1.2752);">fx</span>
<span class="t" style="left:87.30px;top:544px;font-size:10px;color:#1e1e1e;transform:scaleX(0.9132);">get_customer_balance</span>
<svg class="i" style="left:58.00px;top:559.80px;" width="4" height="6.4" viewBox="0 0 4 6.4"><path d="M0.2 0 L3.6 3.2 L0.2 6.4 Z" fill="#7a7a7a"/></svg>
<span class="t" style="left:69.45px;top:557px;font-size:11.5px;color:#4a4a4a;font-family:'Liberation Serif',serif;font-style:italic;transform:scaleX(1.2752);">fx</span>
<span class="t" style="left:87.30px;top:558px;font-size:10px;color:#1e1e1e;transform:scaleX(0.9291);">inventory_held_by_customer</span>
<div style="left:84.60px;top:570.10px;width:168.20px;height:13.90px;background:#e5f0fb;"></div>
<svg class="i" style="left:58.00px;top:574.30px;" width="4" height="6.4" viewBox="0 0 4 6.4"><path d="M0.2 0 L3.6 3.2 L0.2 6.4 Z" fill="#7a7a7a"/></svg>
<span class="t" style="left:69.45px;top:571px;font-size:11.5px;color:#4a4a4a;font-family:'Liberation Serif',serif;font-style:italic;transform:scaleX(1.2752);">fx</span>
<span class="t" style="left:87.30px;top:573px;font-size:10px;color:#1e1e1e;transform:scaleX(0.9381);">inventory_in_stock</span>
<svg class="i" style="left:41.80px;top:588.80px;" width="4" height="6.4" viewBox="0 0 4 6.4"><path d="M0.2 0 L3.6 3.2 L0.2 6.4 Z" fill="#7a7a7a"/></svg>
<svg class="i" style="left:52.75px;top:584.65px;" width="13.5" height="13.5" viewBox="0 0 16 16"><path d="M1.4 3.2 H6.4 L7.6 4.8 H14.6 V13.4 H1.4 Z" fill="#dcb67a"/><path d="M1.4 5.6 H14.6 V13.4 H1.4 Z" fill="#e3c08a"/></svg>
<span class="t" style="left:71.00px;top:587px;font-size:10px;color:#1e1e1e;transform:scaleX(0.9088);">Triggers</span>
<svg class="i" style="left:41.80px;top:603.30px;" width="4" height="6.4" viewBox="0 0 4 6.4"><path d="M0.2 0 L3.6 3.2 L0.2 6.4 Z" fill="#7a7a7a"/></svg>
<svg class="i" style="left:52.75px;top:599.15px;" width="13.5" height="13.5" viewBox="0 0 16 16"><path d="M1.4 3.2 H6.4 L7.6 4.8 H14.6 V13.4 H1.4 Z" fill="#dcb67a"/><path d="M1.4 5.6 H14.6 V13.4 H1.4 Z" fill="#e3c08a"/></svg>
<span class="t" style="left:71.00px;top:602px;font-size:10px;color:#1e1e1e;transform:scaleX(0.8832);">Sequences</span>
<svg class="i" style="left:41.80px;top:617.80px;" width="4" height="6.4" viewBox="0 0 4 6.4"><path d="M0.2 0 L3.6 3.2 L0.2 6.4 Z" fill="#7a7a7a"/></svg>
<svg class="i" style="left:52.75px;top:613.65px;" width="13.5" height="13.5" viewBox="0 0 16 16"><path d="M1.4 3.2 H6.4 L7.6 4.8 H14.6 V13.4 H1.4 Z" fill="#dcb67a"/><path d="M1.4 5.6 H14.6 V13.4 H1.4 Z" fill="#e3c08a"/></svg>
<span class="t" style="left:71.00px;top:616px;font-size:10px;color:#1e1e1e;transform:scaleX(0.9059);">Events</span>
<svg class="i" style="left:25.60px;top:632.30px;" width="4" height="6.4" viewBox="0 0 4 6.4"><path d="M0.2 0 L3.6 3.2 L0.2 6.4 Z" fill="#7a7a7a"/></svg>
<svg class="i" style="left:36.35px;top:627.80px;" width="13.4" height="13.4" viewBox="0 0 16 16"><path d="M1.7 3.6 V12.4 C1.7 15.3 14.3 15.3 14.3 12.4 V3.6 Z" fill="#3c3c3c"/><ellipse cx="8" cy="3.6" rx="6.3" ry="2.7" fill="#3c3c3c"/><ellipse cx="8" cy="3.7" rx="5" ry="1.7" fill="#fff"/></svg>
<span class="t" style="left:54.70px;top:631px;font-size:10px;color:#1e1e1e;transform:scaleX(0.9185);">sakila_test</span>
<svg class="i" style="left:25.60px;top:646.80px;" width="4" height="6.4" viewBox="0 0 4 6.4"><path d="M0.2 0 L3.6 3.2 L0.2 6.4 Z" fill="#7a7a7a"/></svg>
<svg class="i" style="left:36.35px;top:642.30px;" width="13.4" height="13.4" viewBox="0 0 16 16"><path d="M1.7 3.6 V12.4 C1.7 15.3 14.3 15.3 14.3 12.4 V3.6 Z" fill="#3c3c3c"/><ellipse cx="8" cy="3.6" rx="6.3" ry="2.7" fill="#3c3c3c"/><ellipse cx="8" cy="3.7" rx="5" ry="1.7" fill="#fff"/></svg>
<span class="t" style="left:54.70px;top:645px;font-size:10px;color:#1e1e1e;transform:scaleX(1.0109);">test</span>
<div style="left:257.00px;top:106.00px;width:88.50px;height:19.40px;background:#007acc;"></div>
<div style="left:257.00px;top:124.80px;width:764.40px;height:2.30px;background:#007acc;"></div>
<svg class="i" style="left:267.00px;top:107.80px;" width="13.6" height="13.6" viewBox="0 0 16 16"><path d="M5.6 2 H13 Q15 2 15 4.2 V5.6 H12.2 V12 Q12.2 14.6 9.6 14.6 H3 Q1.2 14.6 1.2 12.8 V11.2 H5.6 Z" fill="none" stroke="#e6f0fa" stroke-width="3"/><path d="M5.6 2 H13 Q15 2 15 4.2 V5.6 H12.2 V12 Q12.2 14.6 9.6 14.6 H3 Q1.2 14.6 1.2 12.8 V11.2 H5.6 Z" fill="#fff" stroke="#1e1e1e" stroke-width="1.2"/><path d="M1.4 12.8 H9.6" stroke="#1e1e1e" stroke-width="2.2"/></svg>
<span class="t" style="left:282.80px;top:111px;font-size:10px;color:#ffffff;transform:scaleX(0.9172);">SQL.sql*</span>
<svg class="i" style="left:330.60px;top:112.40px;" width="7" height="7" viewBox="0 0 7 7"><path d="M0.5 0.5 L6.5 6.5 M6.5 0.5 L0.5 6.5" stroke="#fff" stroke-width="1.3" fill="none"/></svg>
<svg class="i" style="left:1010.00px;top:113.40px;" width="6.8" height="3.8" viewBox="0 0 6.8 3.8"><path d="M0 0 H6.8 L3.4 3.6 Z" fill="#1e1e1e"/></svg>
<div style="left:257.00px;top:127.10px;width:764.40px;height:538.40px;background:#f0f0f0;border:1px solid #d9dae5;box-sizing:border-box;border-top:none;"></div>
<div style="left:257.60px;top:127.10px;width:17.10px;height:500.00px;background:#efeff3;"></div>
<div style="left:274.70px;top:127.10px;width:731.70px;height:500.00px;background:#ffffff;"></div>
<div style="left:274.80px;top:127.00px;width:3.40px;height:12.77px;background:#ffff00;"></div>
<div style="left:274.80px;top:318.55px;width:3.40px;height:12.77px;background:#ffff00;"></div>
<div style="left:274.80px;top:497.33px;width:3.40px;height:12.77px;background:#ffff00;"></div>
<div style="left:281.50px;top:158.64px;width:1.20px;height:409.24px;background:#d0d0dc;"></div>
<div style="left:288.40px;top:318.85px;width:718.00px;height:12.87px;background:#e6e6fa;"></div>
<div style="left:300.20px;top:280.94px;width:704.00px;height:1.00px;background:#e0e0e0;"></div>
<div style="left:300.20px;top:280.94px;width:1.00px;height:12.57px;background:#e0e0e0;"></div>
<div style="left:288.40px;top:293.51px;width:12.80px;height:1.00px;background:#e0e0e0;"></div>
<div style="left:288.40px;top:293.51px;width:1.00px;height:38.11px;background:#e0e0e0;"></div>
<div style="left:288.40px;top:331.62px;width:132.00px;height:1.00px;background:#e0e0e0;"></div>
<div style="left:420.40px;top:318.85px;width:1.00px;height:13.77px;background:#e0e0e0;"></div>
<div style="left:420.40px;top:318.85px;width:583.80px;height:1.00px;background:#e0e0e0;"></div>
<div style="left:1004.20px;top:280.94px;width:1.00px;height:38.91px;background:#e0e0e0;"></div>
<div style="left:300.20px;top:395.87px;width:704.00px;height:1.00px;background:#e0e0e0;"></div>
<div style="left:300.20px;top:395.87px;width:1.00px;height:12.57px;background:#e0e0e0;"></div>
<div style="left:288.40px;top:408.44px;width:12.80px;height:1.00px;background:#e0e0e0;"></div>
<div style="left:288.40px;top:408.44px;width:1.00px;height:63.65px;background:#e0e0e0;"></div>
<div style="left:288.40px;top:472.09px;width:192.00px;height:1.00px;background:#e0e0e0;"></div>
<div style="left:480.40px;top:459.32px;width:1.00px;height:13.77px;background:#e0e0e0;"></div>
<div style="left:480.40px;top:459.32px;width:523.80px;height:1.00px;background:#e0e0e0;"></div>
<div style="left:1004.20px;top:395.87px;width:1.00px;height:64.45px;background:#e0e0e0;"></div>
<div style="left:278.00px;top:154.94px;width:7.70px;height:8.00px;background:#fff;border:1px solid #c9c9d6;box-sizing:border-box;"></div>
<div style="left:279.90px;top:158.44px;width:3.90px;height:1.00px;background:#b4b4c2;"></div>
<div style="left:278.00px;top:193.25px;width:7.70px;height:8.00px;background:#fff;border:1px solid #c9c9d6;box-sizing:border-box;"></div>
<div style="left:279.90px;top:196.75px;width:3.90px;height:1.00px;background:#b4b4c2;"></div>
<div style="left:278.00px;top:282.64px;width:7.70px;height:8.00px;background:#fff;border:1px solid #c9c9d6;box-sizing:border-box;"></div>
<div style="left:279.90px;top:286.14px;width:3.90px;height:1.00px;background:#b4b4c2;"></div>
<div style="left:278.00px;top:346.49px;width:7.70px;height:8.00px;background:#fff;border:1px solid #c9c9d6;box-sizing:border-box;"></div>
<div style="left:279.90px;top:349.99px;width:3.90px;height:1.00px;background:#b4b4c2;"></div>
<div style="left:278.00px;top:397.57px;width:7.70px;height:8.00px;background:#fff;border:1px solid #c9c9d6;box-sizing:border-box;"></div>
<div style="left:279.90px;top:401.07px;width:3.90px;height:1.00px;background:#b4b4c2;"></div>
<div style="left:278.00px;top:486.96px;width:7.70px;height:8.00px;background:#fff;border:1px solid #c9c9d6;box-sizing:border-box;"></div>
<div style="left:279.90px;top:490.46px;width:3.90px;height:1.00px;background:#b4b4c2;"></div>
<div style="left:281.50px;top:330.62px;width:4.40px;height:1.00px;background:#d0d0dc;"></div>
<div style="left:281.50px;top:381.70px;width:4.40px;height:1.00px;background:#d0d0dc;"></div>
<div style="left:281.50px;top:471.09px;width:4.40px;height:1.00px;background:#d0d0dc;"></div>
<div style="left:281.50px;top:547.71px;width:4.40px;height:1.00px;background:#d0d0dc;"></div>
<div style="left:281.50px;top:573.25px;width:4.40px;height:1.00px;background:#d0d0dc;"></div>
<div id="code" style="left:289.30px;top:127.10px;width:720px;height:500px;font-family:'Liberation Mono', monospace;font-size:10.40px;letter-spacing:-0.274px;line-height:12.77px;white-space:pre;">
<div style="left:0;top:1.50px;height:12.77px;"></div>
<div style="left:0;top:14.27px;height:12.77px;"><span style="color:#1a1aff">CREATE DEFINER</span><span style="color:#949494"> = </span><span style="color:#ff1a1a">'root'</span><span style="color:#1a8a8a">@'localhost'</span></div>
<div style="left:0;top:27.04px;height:12.77px;"><span style="color:#1a1aff">FUNCTION </span><span style="color:#1a8a8a">inventory_in_stock </span><span style="color:#949494">(</span><span style="color:#1a8a8a">p_inventory_id </span><span style="color:#1a1aff">int</span><span style="color:#949494">)</span></div>
<div style="left:0;top:39.81px;height:12.77px;"><span style="color:#1a1aff">RETURNS tinyint</span><span style="color:#949494">(</span><span style="color:#1a1a1a">1</span><span style="color:#949494">)</span></div>
<div style="left:0;top:52.58px;height:12.77px;"><span style="color:#1a1aff">READS SQL DATA</span></div>
<div style="left:0;top:65.35px;height:12.77px;"><span style="color:#1a1aff">BEGIN</span></div>
<div style="left:0;top:78.12px;height:12.77px;"><span style="color:#1a1aff">  DECLARE </span><span style="color:#1a8a8a">v_rentals </span><span style="color:#1a1aff">int</span><span style="color:#949494">;</span></div>
<div style="left:0;top:90.89px;height:12.77px;"><span style="color:#1a1aff">  DECLARE </span><span style="color:#1a8a8a">v_out </span><span style="color:#1a1aff">int</span><span style="color:#949494">;</span></div>
<div style="left:0;top:103.66px;height:12.77px;"></div>
<div style="left:0;top:116.43px;height:12.77px;"><span style="color:#1a8c1a">  #AN ITEM IS IN-STOCK IF THERE ARE EITHER NO ROWS IN THE rental TABLE</span></div>
<div style="left:0;top:129.20px;height:12.77px;"><span style="color:#1a8c1a">  #FOR THE ITEM OR ALL ROWS HAVE return_date POPULATED</span></div>
<div style="left:0;top:141.97px;height:12.77px;"></div>
<div style="left:0;top:154.74px;height:12.77px;"><span style="color:#1a1aff">  SELECT</span></div>
<div style="left:0;top:167.51px;height:12.77px;"><span style="color:#ff2aff">    COUNT</span><span style="color:#949494">(*) </span><span style="color:#1a1aff">INTO </span><span style="color:#1a8a8a">v_rentals</span></div>
<div style="left:0;top:180.28px;height:12.77px;"><span style="color:#1a1aff">  FROM </span><span style="color:#1a8a8a">rental</span></div>
<div style="left:0;top:193.05px;height:12.77px;"><span style="color:#1a1aff">  WHERE </span><span style="color:#1a8a8a">inventory_id </span><span style="color:#949494">=  ;</span></div>
<div style="left:0;top:205.82px;height:12.77px;"></div>
<div style="left:0;top:218.59px;height:12.77px;"><span style="color:#1a1aff">  IF </span><span style="color:#1a8a8a">v_rentals </span><span style="color:#949494">= </span><span style="color:#1a1a1a">0 </span><span style="color:#1a1aff">THEN</span></div>
<div style="left:0;top:231.36px;height:12.77px;"><span style="color:#1a1aff">    RETURN TRUE</span><span style="color:#949494">;</span></div>
<div style="left:0;top:244.13px;height:12.77px;"><span style="color:#1a1aff">  END IF</span><span style="color:#949494">;</span></div>
<div style="left:0;top:256.90px;height:12.77px;"></div>
<div style="left:0;top:269.67px;height:12.77px;"><span style="color:#1a1aff">  SELECT</span></div>
<div style="left:0;top:282.44px;height:12.77px;"><span style="color:#ff2aff">    COUNT</span><span style="color:#949494">(</span><span style="color:#1a8a8a">rental_id</span><span style="color:#949494">) </span><span style="color:#1a1aff">INTO </span><span style="color:#1a8a8a">v_out</span></div>
<div style="left:0;top:295.21px;height:12.77px;"><span style="color:#1a1aff">  FROM </span><span style="color:#1a8a8a">inventory</span></div>
<div style="left:0;top:307.98px;height:12.77px;"><span style="color:#1a1aff">    LEFT JOIN </span><span style="color:#1a8a8a">rental </span><span style="color:#1a1aff">USING </span><span style="color:#949494">(</span><span style="color:#1a8a8a">inventory_id</span><span style="color:#949494">)</span></div>
<div style="left:0;top:320.75px;height:12.77px;"><span style="color:#1a1aff">  WHERE </span><span style="color:#1a8a8a">inventory</span><span style="color:#949494">.</span><span style="color:#1a8a8a">inventory_id </span><span style="color:#949494">= </span><span style="color:#1a8a8a">p_inventory_id</span></div>
<div style="left:0;top:333.52px;height:12.77px;"><span style="color:#1a1aff">  AND </span><span style="color:#1a8a8a">rental</span><span style="color:#949494">.</span><span style="color:#1a8a8a">return_date </span><span style="color:#1a1aff">IS NULL</span><span style="color:#949494">;</span></div>
<div style="left:0;top:346.29px;height:12.77px;"></div>
<div style="left:0;top:359.06px;height:12.77px;"><span style="color:#1a1aff">  IF </span><span style="color:#1a8a8a">v_out </span><span style="color:#949494">&gt; </span><span style="color:#1a1a1a">0 </span><span style="color:#1a1aff">THEN</span></div>
<div style="left:0;top:371.83px;height:12.77px;"><span style="color:#1a1aff">    RETURN FALSE</span><span style="color:#949494">;</span></div>
<div style="left:0;top:384.60px;height:12.77px;"><span style="color:#1a1aff">  ELSE</span></div>
<div style="left:0;top:397.37px;height:12.77px;"><span style="color:#1a1aff">    RETURN TRUE</span><span style="color:#949494">;</span></div>
<div style="left:0;top:410.14px;height:12.77px;"><span style="color:#1a1aff">  END IF</span><span style="color:#949494">;</span></div>
<div style="left:0;top:422.91px;height:12.77px;"><span style="color:#1a1aff">END</span></div>
<div style="left:0;top:435.68px;height:12.77px;"><span style="color:#949494">$$</span></div>
<div style="left:0;top:448.45px;height:12.77px;"></div>
<div style="left:0;top:461.22px;height:12.77px;"><span style="color:#1a1aff">DELIMITER ;</span></div>
</div>
<div style="left:426.90px;top:319.05px;width:1.50px;height:12.00px;background:#000;"></div>
<div style="left:1006.40px;top:127.10px;width:14.00px;height:500.00px;background:#e3e3e7;"></div>
<div style="left:1006.40px;top:127.10px;width:14.00px;height:13.60px;background:#f1f1f4;border:1px solid #d0d2e0;box-sizing:border-box;border-top:none;border-right:none;"></div>
<svg class="i" style="left:1009.40px;top:129.60px;" width="8" height="8.6" viewBox="0 0 8 8.6"><path d="M0 4.3 H8" stroke="#1e1e1e" stroke-width="1.6"/><path d="M2.6 1.6 H5.4 L4 0.2 Z M2.6 7 H5.4 L4 8.4 Z" fill="#3c3c3c"/></svg>
<svg class="i" style="left:1010.00px;top:145.20px;" width="6.8" height="3.8" viewBox="0 0 6.8 3.8"><path d="M0 3.8 H6.8 L3.4 0 Z" fill="#9a9a9d"/></svg>
<div style="left:1009.50px;top:155.00px;width:7.60px;height:236.40px;background:#b9b9bc;"></div>
<svg class="i" style="left:1010.00px;top:618.20px;" width="6.8" height="3.8" viewBox="0 0 6.8 3.8"><path d="M0 0 H6.8 L3.4 3.8 Z" fill="#98989c"/></svg>
<div style="left:257.60px;top:627.00px;width:748.80px;height:14.00px;background:#e4e4e6;"></div>
<div style="left:257.60px;top:627.00px;width:17.10px;height:14.00px;background:#f1f1f4;border:1px solid #dcdce4;box-sizing:border-box;border-left:none;border-bottom:none;"></div>
<svg class="i" style="left:261.80px;top:629.40px;" width="9" height="9.4" viewBox="0 0 9 9.4"><path d="M4.5 0 V9.4" stroke="#1e1e1e" stroke-width="1.5"/><path d="M0.2 4.7 L2.2 3.2 V6.2 Z M8.8 4.7 L6.8 3.2 V6.2 Z" fill="#3c3c3c"/></svg>
<div style="left:274.70px;top:627.00px;width:14.00px;height:14.00px;background:#e9e9ec;"></div>
<svg class="i" style="left:279.40px;top:631.00px;" width="4" height="6.8" viewBox="0 0 4 6.8"><path d="M4 0 V6.8 L0 3.4 Z" fill="#b4b4b8"/></svg>
<svg class="i" style="left:997.00px;top:631.00px;" width="4" height="6.8" viewBox="0 0 4 6.8"><path d="M0 0 V6.8 L4 3.4 Z" fill="#98989c"/></svg>
<div style="left:1006.40px;top:627.00px;width:14.00px;height:14.00px;background:#eeeef2;"></div>
<div style="left:257.60px;top:641.00px;width:763.00px;height:24.00px;background:#f0f0f0;"></div>
<div style="left:259.40px;top:643.20px;width:47.80px;height:20.60px;background:#f1f2f4;border:1px solid #3a96dd;box-sizing:border-box;"></div>
<svg class="i" style="left:263.80px;top:646.20px;" width="13.4" height="13.4" viewBox="0 0 16 16"><path d="M5.6 2 H13 Q15 2 15 4.2 V5.6 H12.2 V12 Q12.2 14.6 9.6 14.6 H3 Q1.2 14.6 1.2 12.8 V11.2 H5.6 Z" fill="#fff" stroke="#1e1e1e" stroke-width="1.3"/><path d="M1.4 12.6 H9.6" stroke="#1e1e1e" stroke-width="2"/></svg>
<span class="t" style="left:281.00px;top:648px;font-size:10px;color:#1e1e1e;font-weight:bold;transform:scaleX(1.1095);">Text</span>
<div style="left:309.50px;top:645.00px;width:1.00px;height:16.50px;background:#d0d1dc;"></div>
<svg class="i" style="left:320.00px;top:649.00px;" width="8.8" height="8.8" viewBox="0 0 8.8 8.8"><path d="M4.4 0 V8.8 M0 4.4 H8.8" stroke="#333" stroke-width="1.8" fill="none"/></svg>
<div style="left:733.90px;top:645.00px;width:1.00px;height:16.50px;background:#d0d1dc;"></div>
<svg class="i" style="left:741.90px;top:646.10px;" width="13.4" height="13.4" viewBox="0 0 16 16"><g fill="#2f8f2f"><rect x="5.3" y="0.6" width="1.6" height="4"/><rect x="9.1" y="0.6" width="1.6" height="4"/><rect x="3.9" y="4.2" width="8.2" height="2.2"/><path d="M4.9 6.2 H11.1 V8.4 Q11.1 10.2 9.4 10.2 H6.6 Q4.9 10.2 4.9 8.4 Z"/><rect x="7.1" y="10" width="1.8" height="5"/></g></svg>
<span class="t" style="left:759.50px;top:648px;font-size:11.2px;color:#1e1e1e;transform:scaleX(0.9068);">Connected.</span>
<div style="left:817.90px;top:645.00px;width:1.00px;height:16.50px;background:#d0d1dc;"></div>
<span class="t" style="left:825.40px;top:648px;font-size:11.2px;color:#1e1e1e;transform:scaleX(0.8850);">localhost (10.3)</span>
<div style="left:900.00px;top:645.00px;width:1.00px;height:16.50px;background:#d0d1dc;"></div>
<span class="t" style="left:907.50px;top:648px;font-size:11.2px;color:#1e1e1e;transform:scaleX(0.9595);">root</span>
<div style="left:932.50px;top:645.00px;width:1.00px;height:16.50px;background:#d0d1dc;"></div>
<span class="t" style="left:939.50px;top:648px;font-size:11.2px;color:#1e1e1e;transform:scaleX(0.8564);">sakila</span>
<div style="left:971.10px;top:645.00px;width:1.00px;height:16.50px;background:#d0d1dc;"></div>
<div style="left:974.00px;top:643.20px;width:23.00px;height:20.80px;background:#f1f2f4;border:1px solid #3a96dd;box-sizing:border-box;"></div>
<svg class="i" style="left:979.20px;top:646.10px;" width="13.6" height="13.6" viewBox="0 0 16 16"><rect x="2" y="2.4" width="12" height="11.4" rx="1" fill="#f2f2f5" stroke="#555" stroke-width="1.3"/><rect x="2" y="8.6" width="12" height="5.2" fill="#3c3c3c"/></svg>
<svg class="i" style="left:1001.40px;top:646.10px;" width="13.6" height="13.6" viewBox="0 0 16 16"><rect x="2" y="2.4" width="12" height="11.4" rx="1" fill="#f2f2f5" stroke="#555" stroke-width="1.3"/></svg>
<div style="left:398.40px;top:332.20px;width:284.20px;height:200.40px;background:#f2f2f2;border:1px solid #d6d6d6;box-sizing:border-box;"></div>
<div style="left:666.60px;top:333.00px;width:15.00px;height:198.60px;background:#e6e6e8;"></div>
<svg class="i" style="left:670.40px;top:338.40px;" width="6.8" height="3.8" viewBox="0 0 6.8 3.8"><path d="M0 3.8 H6.8 L3.4 0 Z" fill="#a3a3a8"/></svg>
<div style="left:670.00px;top:348.10px;width:7.60px;height:14.40px;background:#b4b4b6;"></div>
<svg class="i" style="left:670.40px;top:522.40px;" width="6.8" height="3.8" viewBox="0 0 6.8 3.8"><path d="M0 0 H6.8 L3.4 3.8 Z" fill="#98989c"/></svg>
<svg class="i" style="left:414.70px;top:335.20px;" width="12.6" height="12.6" viewBox="0 0 16 16"><path d="M1.5 5.6 L7.3 2.6 L13.1 5.6 V9.6 L7.3 12.6 L1.5 9.6 Z" fill="#2b2b2b"/><path d="M3.6 5.7 L7.3 3.9 L11 5.7 L7.3 7.5 Z" fill="#f4f4f4"/><rect x="0.6" y="0.4" width="4.2" height="4.2" fill="#eaf6ea" stroke="#2e9a3c" stroke-width="1.9"/></svg>
<span class="t" style="left:429.80px;top:337px;font-size:10px;color:#2a8c8c;transform:scaleX(0.9808);">v_out</span>
<svg class="i" style="left:414.70px;top:350.55px;" width="12.6" height="12.6" viewBox="0 0 16 16"><path d="M1.5 5.6 L7.3 2.6 L13.1 5.6 V9.6 L7.3 12.6 L1.5 9.6 Z" fill="#2b2b2b"/><path d="M3.6 5.7 L7.3 3.9 L11 5.7 L7.3 7.5 Z" fill="#f4f4f4"/><rect x="0.6" y="0.4" width="4.2" height="4.2" fill="#eaf6ea" stroke="#2e9a3c" stroke-width="1.9"/></svg>
<span class="t" style="left:429.80px;top:353px;font-size:10px;color:#2a8c8c;transform:scaleX(0.9513);">v_rentals</span>
<div style="left:428.30px;top:364.00px;width:238.30px;height:15.40px;background:#3399ff;"></div>
<svg class="i" style="left:414.10px;top:365.10px;" width="13" height="13" viewBox="0 0 16 16"><path d="M4.4 5 L7 7.4" stroke="#1a5fb4" stroke-width="1.4"/><rect x="1" y="0.8" width="4" height="4" fill="#eaf6ea" stroke="#2e9a3c" stroke-width="1.9"/></svg>
<span class="t" style="left:418.00px;top:369px;font-size:10px;color:#333;">@</span>
<span class="t" style="left:429.80px;top:368px;font-size:10px;color:#ebe9e0;transform:scaleX(0.9455);">p_inventory_id</span>
<span class="t" style="left:555.20px;top:368px;font-size:10px;color:#ebe9e0;transform:scaleX(0.8512);">INVENTORY_IN_STOCK</span>
<svg class="i" style="left:404.00px;top:386.35px;" width="5.6" height="5.2" viewBox="0 0 5.6 5.2"><path d="M5.4 0 V5 H0.2 Z" fill="#6a6a6a"/></svg>
<svg class="i" style="left:414.60px;top:381.15px;" width="12.8" height="12.8" viewBox="0 0 16 16"><g fill="none" stroke="#444" stroke-width="1"><rect x="1.6" y="2" width="12.8" height="12.2" fill="#fff"/><path d="M1.6 3.2 H14.4" stroke-width="2"/><path d="M1.6 7.6 H14.4 M1.6 10.9 H14.4 M5.9 4 V14.2 M10.1 4 V14.2"/></g></svg>
<span class="t" style="left:429.80px;top:383px;font-size:10px;color:#2a8c8c;transform:scaleX(0.9594);">rental</span>
<span class="t" style="left:554.80px;top:383px;font-size:10px;color:#8c8c8c;transform:scaleX(0.8679);">sakila</span>
<svg class="i" style="left:427.30px;top:396.60px;" width="12.6" height="12.6" viewBox="0 0 16 16"><g fill="#fff" stroke="#3c3c3c" stroke-width="1.2"><rect x="7" y="1.4" width="7.6" height="13.2"/><path d="M7 5.6 H14.6 M7 10.2 H14.6" fill="none"/></g><circle cx="3.4" cy="4.4" r="2.5" fill="#fff" stroke="#2b2b2b" stroke-width="1.5"/><path d="M3.4 6.8 V14.4 M3.4 11 H6.2 M3.4 13.8 H6.2" stroke="#2b2b2b" stroke-width="1.5" fill="none"/></svg>
<span class="t" style="left:442.70px;top:399px;font-size:10px;color:#2a8c8c;transform:scaleX(0.9385);">rental_id</span>
<span class="t" style="left:499.70px;top:399px;font-size:10px;color:#1414f0;transform:scaleX(0.9924);">int(11)</span>
<svg class="i" style="left:427.30px;top:411.95px;" width="12.6" height="12.6" viewBox="0 0 16 16"><g fill="#fff" stroke="#3c3c3c" stroke-width="1.2"><rect x="7" y="1.4" width="7.6" height="13.2"/><path d="M7 5.6 H14.6 M7 10.2 H14.6" fill="none"/></g><circle cx="3.4" cy="11.4" r="3.2" fill="#2b2b2b"/><circle cx="3.4" cy="11.6" r="1" fill="#ddd"/><path d="M3.4 9 V1.4 M3.4 2.2 H6.2 M3.4 5 H6.2" stroke="#2b2b2b" stroke-width="1.7" fill="none"/></svg>
<span class="t" style="left:442.70px;top:414px;font-size:10px;color:#2a8c8c;transform:scaleX(0.9591);">rental_date</span>
<span class="t" style="left:499.70px;top:414px;font-size:10px;color:#1414f0;transform:scaleX(0.9281);">datetime</span>
<svg class="i" style="left:427.30px;top:427.30px;" width="12.6" height="12.6" viewBox="0 0 16 16"><g fill="#fff" stroke="#3c3c3c" stroke-width="1.2"><rect x="7" y="1.4" width="7.6" height="13.2"/><path d="M7 5.6 H14.6 M7 10.2 H14.6" fill="none"/></g><circle cx="3.4" cy="11.4" r="3.2" fill="#2b2b2b"/><circle cx="3.4" cy="11.6" r="1" fill="#ddd"/><path d="M3.4 9 V1.4 M3.4 2.2 H6.2 M3.4 5 H6.2" stroke="#2b2b2b" stroke-width="1.7" fill="none"/></svg>
<span class="t" style="left:442.70px;top:429px;font-size:10px;color:#2a8c8c;transform:scaleX(0.9458);">inventory_id</span>
<span class="t" style="left:499.70px;top:429px;font-size:10px;color:#1414f0;transform:scaleX(0.9035);">mediumint(8) unsigned</span>
<svg class="i" style="left:427.30px;top:442.65px;" width="12.6" height="12.6" viewBox="0 0 16 16"><g fill="#fff" stroke="#3c3c3c" stroke-width="1.2"><rect x="7" y="1.4" width="7.6" height="13.2"/><path d="M7 5.6 H14.6 M7 10.2 H14.6" fill="none"/></g><circle cx="3.4" cy="11.4" r="3.2" fill="#2b2b2b"/><circle cx="3.4" cy="11.6" r="1" fill="#ddd"/><path d="M3.4 9 V1.4 M3.4 2.2 H6.2 M3.4 5 H6.2" stroke="#2b2b2b" stroke-width="1.7" fill="none"/></svg>
<span class="t" style="left:442.70px;top:445px;font-size:10px;color:#2a8c8c;transform:scaleX(0.9088);">customer_id</span>
<span class="t" style="left:499.70px;top:445px;font-size:10px;color:#1414f0;transform:scaleX(0.9006);">smallint(5) unsigned</span>
<svg class="i" style="left:427.30px;top:458.00px;" width="12.6" height="12.6" viewBox="0 0 16 16"><g fill="#fff" stroke="#3c3c3c" stroke-width="1.2"><rect x="3.4" y="1.4" width="7.6" height="13.2"/><path d="M3.4 5.6 H11 M3.4 10.2 H11" fill="none"/></g></svg>
<span class="t" style="left:442.70px;top:460px;font-size:10px;color:#2a8c8c;transform:scaleX(0.9676);">return_date</span>
<span class="t" style="left:499.70px;top:460px;font-size:10px;color:#1414f0;transform:scaleX(0.9281);">datetime</span>
<svg class="i" style="left:427.30px;top:473.35px;" width="12.6" height="12.6" viewBox="0 0 16 16"><g fill="#fff" stroke="#3c3c3c" stroke-width="1.2"><rect x="7" y="1.4" width="7.6" height="13.2"/><path d="M7 5.6 H14.6 M7 10.2 H14.6" fill="none"/></g><circle cx="3.4" cy="4.4" r="3.1" fill="#2b2b2b"/><path d="M3.4 6.8 V14.4 M3.4 11 H6.2 M3.4 13.8 H6.2" stroke="#2b2b2b" stroke-width="1.6" fill="none"/></svg>
<span class="t" style="left:442.70px;top:475px;font-size:10px;color:#2a8c8c;transform:scaleX(0.9825);">staff_id</span>
<span class="t" style="left:499.70px;top:475px;font-size:10px;color:#1414f0;transform:scaleX(0.9361);">tinyint(3) unsigned</span>
<svg class="i" style="left:427.30px;top:488.70px;" width="12.6" height="12.6" viewBox="0 0 16 16"><g fill="#fff" stroke="#3c3c3c" stroke-width="1.2"><rect x="3.4" y="1.4" width="7.6" height="13.2"/><path d="M3.4 5.6 H11 M3.4 10.2 H11" fill="none"/></g></svg>
<span class="t" style="left:442.70px;top:491px;font-size:10px;color:#2a8c8c;transform:scaleX(0.9416);">last_update</span>
<span class="t" style="left:499.70px;top:491px;font-size:10px;color:#1414f0;transform:scaleX(0.9019);">timestamp</span>
<span class="t" style="left:415.60px;top:504px;font-size:11.5px;color:#4a4a4a;font-family:'Liberation Serif',serif;font-style:italic;transform:scaleX(1.2752);">fx</span>
<span class="t" style="left:429.80px;top:506px;font-size:10px;color:#2a8c8c;transform:scaleX(0.9151);">get_customer_balance</span>
<span class="t" style="left:554.80px;top:506px;font-size:10px;color:#8c8c8c;transform:scaleX(0.8679);">sakila</span>
<span class="t" style="left:415.60px;top:520px;font-size:11.5px;color:#4a4a4a;font-family:'Liberation Serif',serif;font-style:italic;transform:scaleX(1.2752);">fx</span>
<span class="t" style="left:429.80px;top:521px;font-size:10px;color:#2a8c8c;transform:scaleX(0.9299);">inventory_held_by_customer</span>
<span class="t" style="left:554.80px;top:521px;font-size:10px;color:#8c8c8c;transform:scaleX(0.8679);">sakila</span>
<div style="left:683.00px;top:362.40px;width:228.00px;height:36.20px;background:#f0f0f0;border:1px solid #d6d6d6;box-sizing:border-box;"></div>
<div style="left:684.00px;top:380.00px;width:226.00px;height:1.00px;background:#dcdcdc;"></div>
<svg class="i" style="left:685.70px;top:363.90px;" width="13" height="13" viewBox="0 0 16 16"><path d="M4.4 5 L7 7.4" stroke="#1a5fb4" stroke-width="1.4"/><rect x="1" y="0.8" width="4" height="4" fill="#eaf6ea" stroke="#2e9a3c" stroke-width="1.9"/></svg>
<span class="t" style="left:690.20px;top:368px;font-size:10px;color:#2b2b2b;">@</span>
<span class="t" style="left:701.80px;top:367px;font-size:10px;color:#1e1e1e;transform:scaleX(0.9391);">inventory_in_stock.</span>
<span class="t" style="left:783.00px;top:367px;font-size:10px;color:#1e1e1e;font-weight:bold;transform:scaleX(1.0289);">p_inventory_id</span>
<span class="t" style="left:859.30px;top:367px;font-size:10px;color:#1e1e1e;transform:scaleX(0.9127);">(Parameter)</span>
<span class="t" style="left:705.30px;top:384px;font-size:10px;color:#1e1e1e;transform:scaleX(0.9439);">p_inventory_id</span>
<span class="t" style="left:779.60px;top:384px;font-size:10px;color:#1414f0;transform:scaleX(0.9562);">int</span>
<span class="t" style="left:803.00px;top:384px;font-size:10px;color:#1414f0;transform:scaleX(0.8333);">INPUT</span>
<svg class="i" style="left:8.15px;top:678.25px;" width="14.5" height="14.5" viewBox="0 0 16 16"><path d="M8.4 2.3 H1.1 V14.2 H8.4" fill="none" stroke="#4a4a4a" stroke-width="1.3"/><path d="M3.6 8.25 H11" stroke="#3a3a3a" stroke-width="1.7"/><path d="M8.8 4.6 L13.2 8.25 L8.8 11.9 Z" fill="#3a3a3a"/></svg>
<span class="t" style="left:22.80px;top:681px;font-size:10px;color:#1e1e1e;transform:scaleX(0.9523);">Output</span>
<div style="left:5.00px;top:697.00px;width:50.50px;height:3.00px;background:#cccedb;"></div>
<div style="left:1.00px;top:700.00px;width:1022.00px;height:24.00px;background:#007acc;"></div>
<span class="t" style="left:11.30px;top:707px;font-size:10.8px;color:#ffffff;transform:scaleX(0.8456);">Ready</span>
<span class="t" style="left:840.90px;top:707px;font-size:10.8px;color:#ffffff;transform:scaleX(0.8879);">Ln 16</span>
<span class="t" style="left:875.00px;top:707px;font-size:10.8px;color:#ffffff;transform:scaleX(0.9161);">Col 24</span>
<span class="t" style="left:914.00px;top:707px;font-size:10.8px;color:#ffffff;transform:scaleX(0.8885);">Ch 24</span>
<svg class="i" style="left:1013.00px;top:713.00px;" width="10" height="11" viewBox="0 0 10 11"><rect x="7.5" y="1" width="1.3" height="1.3" fill="#5ea8dd"/><rect x="5" y="3.5" width="1.3" height="1.3" fill="#5ea8dd"/><rect x="7.5" y="3.5" width="1.3" height="1.3" fill="#5ea8dd"/><rect x="2.5" y="6" width="1.3" height="1.3" fill="#5ea8dd"/><rect x="5" y="6" width="1.3" height="1.3" fill="#5ea8dd"/><rect x="7.5" y="6" width="1.3" height="1.3" fill="#5ea8dd"/><rect x="0" y="8.5" width="1.3" height="1.3" fill="#5ea8dd"/><rect x="2.5" y="8.5" width="1.3" height="1.3" fill="#5ea8dd"/><rect x="5" y="8.5" width="1.3" height="1.3" fill="#5ea8dd"/><rect x="7.5" y="8.5" width="1.3" height="1.3" fill="#5ea8dd"/></svg>
</div></body></html>
